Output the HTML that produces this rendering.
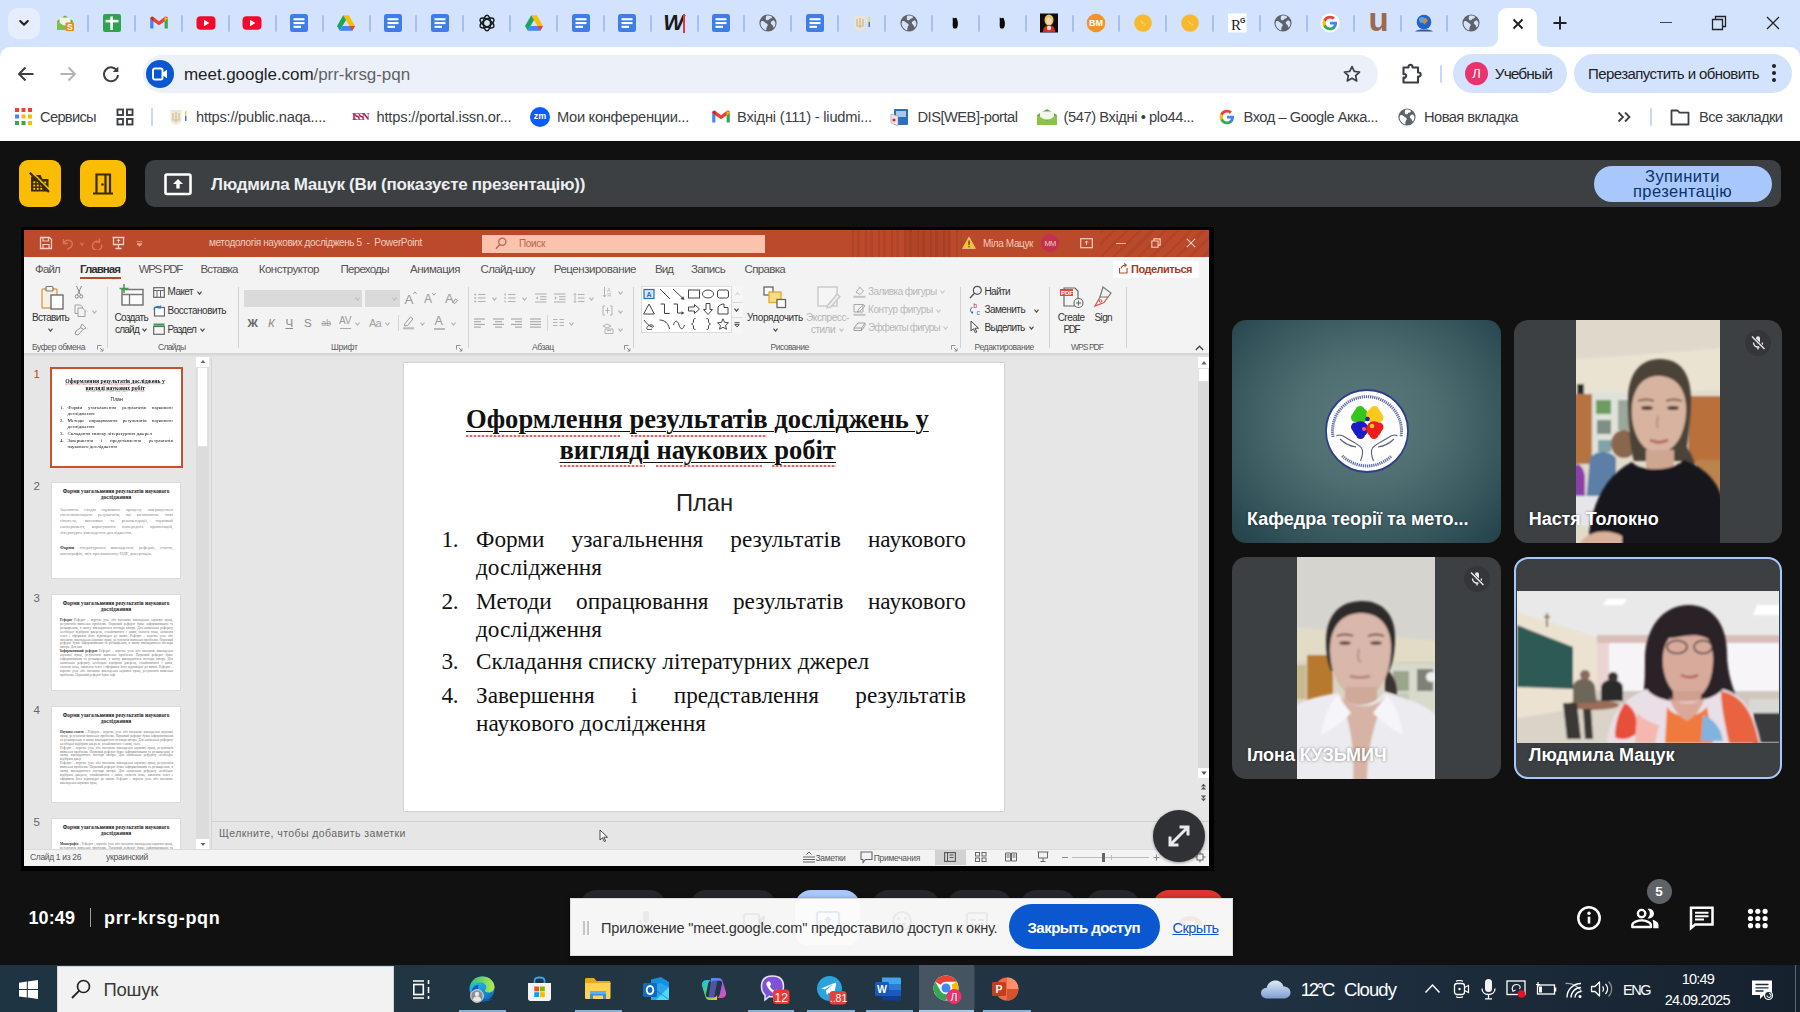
<!DOCTYPE html>
<html lang="uk">
<head>
<meta charset="utf-8">
<title>Meet</title>
<style>
*{box-sizing:border-box;margin:0;padding:0}
html,body{width:1800px;height:1012px;overflow:hidden;background:#111;font-family:"Liberation Sans","DejaVu Sans",sans-serif}
.a{position:absolute}
#root{position:relative;width:1800px;height:1012px;overflow:hidden}
/* ===== Chrome ===== */
#tabstrip{left:0;top:0;width:1800px;height:62px;background:#d3e3fd}
#toolbar{left:0;top:47px;width:1800px;height:94px;background:#fff;border-radius:10px 10px 0 0}
.tsep{width:2px;height:17px;top:15px;background:#a8c0ec;border-radius:1px}
.tico{width:20px;height:20px;top:13px}
#url{left:143px;top:55px;width:1235px;height:38px;border-radius:19px;background:#ecf0f9}
.bm{top:107px;font-size:15.5px;color:#3c4043;white-space:nowrap;letter-spacing:-0.1px}
/* ===== Meet ===== */
#meet{left:0;top:141px;width:1800px;height:824px;background:#111}
.ybtn{top:19px;height:47px;background:#fbbc04;border-radius:9px}
#mbar{left:145px;top:19px;width:1636px;height:47px;background:#3c4043;border-radius:10px}
.tile{background:#3c4043;border-radius:12px;overflow:hidden}
.tname{color:#fff;font-weight:bold;font-size:18px;white-space:nowrap;letter-spacing:-0.2px}
/* ===== PPT ===== */
#pptwrap{left:21px;top:86px;width:1192px;height:643px;background:#000}
#ppt{left:3px;top:3px;width:1185px;height:636px;background:#e6e6e6;overflow:hidden;font-family:"Liberation Sans",sans-serif}
#ptitle{left:0;top:0;width:1185px;height:27px;background:#b7472a}
#ptabs{left:0;top:27px;width:1185px;height:24px;background:#f3f3f3}
#ribbon{left:0;top:51px;width:1185px;height:73px;background:#f3f3f3;border-bottom:1px solid #d4d4d4}
.pt{top:5px;font-size:11.5px;color:#444;white-space:nowrap}
.rl{font-size:10.5px;color:#444;white-space:nowrap}
.rg{font-size:9px;color:#555;white-space:nowrap;top:61px}
.rsep{top:6px;width:1px;height:62px;background:#d0d0d0}
/* ===== Taskbar ===== */
#taskbar{left:0;top:965px;width:1800px;height:47px;background:linear-gradient(90deg,#1e3442 0%,#233643 45%,#1f3041 72%,#16212e 100%)}
</style>
</head>
<body>
<div id="root">

<!-- CHROME TABSTRIP -->
<div id="tabstrip" class="a"></div>
<svg class="a tico" style="left:55px" viewBox="0 0 20 20"><path d="M2 8l8-5.500L18 8v9H2z" fill="#6aa84f"/><path d="M4.500 4.500h11v8h-11z" fill="#eef3e6"/><path d="M2 8l8 5.500L18 8v9H2z" fill="#7fbf4d"/><rect x="10.500" y="9.500" width="8.500" height="8.500" rx="1" fill="#ef8a17"/><text x="14.750" y="16.600" font-size="8.500" font-weight="bold" fill="#fff" text-anchor="middle" font-family="Liberation Sans,sans-serif">S</text></svg>
<div class="a tsep" style="left:87.4px"></div>
<svg class="a tico" style="left:101.9px" viewBox="0 0 20 20"><rect x="1" y="1" width="18" height="18" rx="2" fill="#2ea44f"/><rect x="8.300" y="3.500" width="2.600" height="13.500" fill="#fff"/><rect x="3.500" y="6.800" width="13" height="2.600" fill="#fff"/></svg>
<div class="a tsep" style="left:134.3px"></div>
<svg class="a tico" style="left:148.7px" viewBox="0 0 20 20"><path d="M1.200 5.200v10.300h3.200V8.600z" fill="#4285f4"/><path d="M18.800 5.200v10.300h-3.200V8.600z" fill="#34a853"/><path d="M1.200 5.200c0-1.500 1.700-2.300 2.900-1.400L10 8.300l5.900-4.500c1.200-.9 2.900-.1 2.900 1.400l-3.200 3.400L10 12.200 4.400 8.600z" fill="#ea4335"/><path d="M15.600 4.100l3.200 1.100-3.200 3.400z" fill="#fbbc04"/><path d="M4.400 4.100L1.200 5.200l3.200 3.400z" fill="#c5221f"/></svg>
<div class="a tsep" style="left:181.1px"></div>
<svg class="a tico" style="left:195.6px" viewBox="0 0 20 20"><rect x="0.500" y="3.300" width="19" height="13.400" rx="4" fill="#f00b2c"/><path d="M8 6.800l5.300 3.200L8 13.200z" fill="#fff"/></svg>
<div class="a tsep" style="left:228.0px"></div>
<svg class="a tico" style="left:242.4px" viewBox="0 0 20 20"><rect x="0.500" y="3.300" width="19" height="13.400" rx="4" fill="#f00b2c"/><path d="M8 6.800l5.300 3.200L8 13.200z" fill="#fff"/></svg>
<div class="a tsep" style="left:274.8px"></div>
<svg class="a tico" style="left:289.3px" viewBox="0 0 20 20"><rect x="1" y="1" width="18" height="18" rx="2.5" fill="#3f7ee8"/><rect x="4.5" y="5.2" width="11" height="2.1" fill="#fff"/><rect x="4.5" y="9" width="11" height="2.1" fill="#fff"/><rect x="4.5" y="12.8" width="7.5" height="2.1" fill="#fff"/></svg>
<div class="a tsep" style="left:321.7px"></div>
<svg class="a tico" style="left:336.2px" viewBox="0 0 20 20"><path d="M7.200 2.200h5.600l6.200 10.700h-5.600z" fill="#fbbc04"/><path d="M7.200 2.200L1 12.900l2.800 4.800 6.200-10.700z" fill="#1ea362"/><path d="M3.800 17.700h12.400l2.800-4.800H6.600z" fill="#4285f4"/><path d="M13.400 12.900H19l-2.800 4.800-2.800-4.800z" fill="#ea4335"/></svg>
<div class="a tsep" style="left:368.6px"></div>
<svg class="a tico" style="left:383.0px" viewBox="0 0 20 20"><rect x="1" y="1" width="18" height="18" rx="2.5" fill="#3f7ee8"/><rect x="4.5" y="5.2" width="11" height="2.1" fill="#fff"/><rect x="4.5" y="9" width="11" height="2.1" fill="#fff"/><rect x="4.5" y="12.8" width="7.5" height="2.1" fill="#fff"/></svg>
<div class="a tsep" style="left:415.4px"></div>
<svg class="a tico" style="left:429.9px" viewBox="0 0 20 20"><rect x="1" y="1" width="18" height="18" rx="2.5" fill="#3f7ee8"/><rect x="4.5" y="5.2" width="11" height="2.1" fill="#fff"/><rect x="4.5" y="9" width="11" height="2.1" fill="#fff"/><rect x="4.5" y="12.8" width="7.5" height="2.1" fill="#fff"/></svg>
<div class="a tsep" style="left:462.3px"></div>
<svg class="a tico" style="left:476.7px" viewBox="0 0 20 20"><g fill="none" stroke="#1a1a1a" stroke-width="1.500"><ellipse cx="10" cy="10" rx="3.600" ry="7.800"/><ellipse cx="10" cy="10" rx="3.600" ry="7.800" transform="rotate(60 10 10)"/><ellipse cx="10" cy="10" rx="3.600" ry="7.800" transform="rotate(120 10 10)"/></g></svg>
<div class="a tsep" style="left:509.1px"></div>
<svg class="a tico" style="left:523.6px" viewBox="0 0 20 20"><path d="M7.200 2.200h5.600l6.200 10.700h-5.600z" fill="#fbbc04"/><path d="M7.200 2.200L1 12.900l2.800 4.800 6.200-10.700z" fill="#1ea362"/><path d="M3.800 17.700h12.400l2.800-4.800H6.600z" fill="#4285f4"/><path d="M13.400 12.900H19l-2.800 4.800-2.800-4.800z" fill="#ea4335"/></svg>
<div class="a tsep" style="left:556.0px"></div>
<svg class="a tico" style="left:570.5px" viewBox="0 0 20 20"><rect x="1" y="1" width="18" height="18" rx="2.5" fill="#3f7ee8"/><rect x="4.5" y="5.2" width="11" height="2.1" fill="#fff"/><rect x="4.5" y="9" width="11" height="2.1" fill="#fff"/><rect x="4.5" y="12.8" width="7.5" height="2.1" fill="#fff"/></svg>
<div class="a tsep" style="left:602.9px"></div>
<svg class="a tico" style="left:617.3px" viewBox="0 0 20 20"><rect x="1" y="1" width="18" height="18" rx="2.5" fill="#3f7ee8"/><rect x="4.5" y="5.2" width="11" height="2.1" fill="#fff"/><rect x="4.5" y="9" width="11" height="2.1" fill="#fff"/><rect x="4.5" y="12.8" width="7.5" height="2.1" fill="#fff"/></svg>
<div class="a tsep" style="left:649.7px"></div>
<div class="a" style="left:663.2px;top:10px;width:24px;height:26px;font:italic bold 22px 'Liberation Sans',sans-serif;color:#1a1a1a;letter-spacing:-1px">W</div><div class="a" style="left:683.1800000000001px;top:14px;width:1.500px;height:19px;background:#e53935"></div>
<div class="a tsep" style="left:696.6px"></div>
<svg class="a tico" style="left:711.0px" viewBox="0 0 20 20"><rect x="1" y="1" width="18" height="18" rx="2.5" fill="#3f7ee8"/><rect x="4.5" y="5.2" width="11" height="2.1" fill="#fff"/><rect x="4.5" y="9" width="11" height="2.1" fill="#fff"/><rect x="4.5" y="12.8" width="7.5" height="2.1" fill="#fff"/></svg>
<div class="a tsep" style="left:743.4px"></div>
<svg class="a tico" style="left:757.9px" viewBox="0 0 20 20"><circle cx="10" cy="10" r="8.6" fill="#5f6368"/><path d="M3.2 8.2c1.6-.4 3 .2 3.9 1.4.8 1 2.3.9 2.6 2.2.3 1.300-1.200 1.800-1.300 3.100-.1.900.2 1.800-.4 2.500C5.300 16.600 3 14.200 2.600 11.300c-.1-1.100.1-2.200.6-3.100zM8.300 2.700c1.800-.5 3.900-.3 5.600.7.300 1.300-.6 2-1.700 2.200-1.200.3-1.300 1.500-2.400 1.700-1.200.2-2.100-.7-2.100-1.800 0-1.100.200-2.100.600-2.800zM15.600 7.300c.9.600 1.600 1.600 1.800 2.800.100 1.600-.5 3.300-1.600 4.400-.8-.5-.7-1.600-1.300-2.300-.6-.8-1.700-1-1.700-2.100 0-1.300 1.400-2.500 2.800-2.800z" fill="#d3e3fd"/></svg>
<div class="a tsep" style="left:790.3px"></div>
<svg class="a tico" style="left:804.8px" viewBox="0 0 20 20"><rect x="1" y="1" width="18" height="18" rx="2.5" fill="#3f7ee8"/><rect x="4.5" y="5.2" width="11" height="2.1" fill="#fff"/><rect x="4.5" y="9" width="11" height="2.1" fill="#fff"/><rect x="4.5" y="12.8" width="7.5" height="2.1" fill="#fff"/></svg>
<div class="a tsep" style="left:837.2px"></div>
<svg class="a tico" style="left:851.6px" viewBox="0 0 20 20"><path d="M2.500 3h11v9.500c0 3-3 4.500-5.500 5.500-2.500-1-5.500-2.500-5.500-5.500z" fill="#ece4d4"/><path d="M5 6v7h6V6M8 5v10" stroke="#c9b98f" stroke-width="1.200" fill="none"/><rect x="16.500" y="4" width="1.500" height="5" fill="#e6d74a"/><rect x="16.500" y="9" width="1.500" height="5" fill="#4a74d9"/></svg>
<div class="a tsep" style="left:884.0px"></div>
<svg class="a tico" style="left:898.5px" viewBox="0 0 20 20"><circle cx="10" cy="10" r="8.6" fill="#5f6368"/><path d="M3.2 8.2c1.6-.4 3 .2 3.9 1.4.8 1 2.3.9 2.6 2.2.3 1.300-1.200 1.800-1.300 3.100-.1.900.2 1.800-.4 2.500C5.300 16.600 3 14.200 2.600 11.300c-.1-1.100.1-2.200.6-3.100zM8.300 2.700c1.800-.5 3.900-.3 5.600.7.300 1.300-.6 2-1.700 2.200-1.200.3-1.300 1.500-2.400 1.700-1.200.2-2.100-.7-2.100-1.800 0-1.100.200-2.100.600-2.800zM15.600 7.300c.9.600 1.600 1.600 1.800 2.800.100 1.600-.5 3.300-1.600 4.400-.8-.5-.7-1.600-1.300-2.300-.6-.8-1.700-1-1.700-2.100 0-1.300 1.400-2.500 2.800-2.800z" fill="#d3e3fd"/></svg>
<div class="a tsep" style="left:930.9px"></div>
<svg class="a tico" style="left:945.3px" viewBox="0 0 20 20"><path d="M7.800 4.500c.8.200 1 .8 1.500.8.700 0 1.300-.6 2.300-.4.300 1.200.9 2.300 1.200 4 .3 2 .1 4.600-1 6.200-.5.800-1.400.4-2.100.4-.8 0-1.400.1-1.700-1-.5-1.600-.3-3.800-.2-5.400.1-1.700-.3-3.300 0-4.600z" fill="#0b0b0b"/></svg>
<div class="a tsep" style="left:977.7px"></div>
<svg class="a tico" style="left:992.2px" viewBox="0 0 20 20"><path d="M7.800 4.500c.8.200 1 .8 1.500.8.700 0 1.300-.6 2.300-.4.300 1.200.9 2.300 1.200 4 .3 2 .1 4.600-1 6.200-.5.800-1.400.4-2.100.4-.8 0-1.400.1-1.700-1-.5-1.600-.3-3.800-.2-5.400.1-1.700-.3-3.300 0-4.600z" fill="#0b0b0b"/></svg>
<div class="a tsep" style="left:1024.6px"></div>
<svg class="a tico" style="left:1039.1px" viewBox="0 0 20 20"><rect x="1" y="0.500" width="18" height="19" fill="#140a08"/><ellipse cx="10" cy="7" rx="4.500" ry="5.500" fill="#e8c36a"/><ellipse cx="10" cy="8" rx="2.600" ry="3.300" fill="#f3d8b8"/><path d="M4 19c0-5 3-7 6-7s6 2 6 7z" fill="#d62a1f"/><circle cx="10" cy="15" r="2.200" fill="#f2e6dc"/></svg>
<div class="a tsep" style="left:1071.5px"></div>
<svg class="a tico" style="left:1085.9px" viewBox="0 0 20 20"><circle cx="10" cy="10" r="9.300" fill="#f4932c"/><text x="10" y="13.300" font-size="9" font-weight="bold" fill="#fff" text-anchor="middle" font-family="Liberation Sans,sans-serif">BM</text></svg>
<div class="a tsep" style="left:1118.3px"></div>
<svg class="a tico" style="left:1132.8px" viewBox="0 0 20 20"><circle cx="10" cy="10" r="8.800" fill="#f9b92e"/><path d="M7.500 7.500c1.500.8 2 1.800 2.500 3.500m1.500-.5c.3.600.5 1 .8 1.700" stroke="#fbd67c" stroke-width="1.200" fill="none"/></svg>
<div class="a tsep" style="left:1165.2px"></div>
<svg class="a tico" style="left:1179.6px" viewBox="0 0 20 20"><circle cx="10" cy="10" r="8.800" fill="#f9b92e"/><path d="M7.500 7.500c1.500.8 2 1.800 2.500 3.500m1.500-.5c.3.600.5 1 .8 1.700" stroke="#fbd67c" stroke-width="1.200" fill="none"/></svg>
<div class="a tsep" style="left:1212.0px"></div>
<svg class="a tico" style="left:1226.5px" viewBox="0 0 20 20"><rect x="1" y="0.500" width="18.500" height="19" fill="#fff"/><text x="4" y="16.500" font-size="15" fill="#222" font-family="Liberation Serif,serif">R</text><text x="13" y="9.500" font-size="7" font-weight="bold" fill="#222" font-family="Liberation Sans,sans-serif">G</text></svg>
<div class="a tsep" style="left:1258.9px"></div>
<svg class="a tico" style="left:1273.4px" viewBox="0 0 20 20"><circle cx="10" cy="10" r="8.6" fill="#5f6368"/><path d="M3.2 8.2c1.6-.4 3 .2 3.9 1.4.8 1 2.3.9 2.6 2.2.3 1.300-1.200 1.800-1.300 3.100-.1.900.2 1.800-.4 2.500C5.300 16.600 3 14.200 2.600 11.300c-.1-1.100.1-2.200.6-3.100zM8.300 2.700c1.800-.5 3.900-.3 5.600.7.300 1.300-.6 2-1.700 2.200-1.200.3-1.300 1.500-2.400 1.700-1.200.2-2.100-.7-2.100-1.800 0-1.100.200-2.100.600-2.800zM15.600 7.300c.9.600 1.600 1.600 1.800 2.800.100 1.600-.5 3.300-1.600 4.400-.8-.5-.7-1.600-1.300-2.300-.6-.8-1.700-1-1.700-2.100 0-1.300 1.400-2.500 2.800-2.800z" fill="#d3e3fd"/></svg>
<div class="a tsep" style="left:1305.8px"></div>
<svg class="a tico" style="left:1320.2px" viewBox="0 0 20 20"><circle cx="10" cy="10" r="9.600" fill="#fff"/><path d="M17 10.200c0-.5 0-.9-.1-1.400H10v2.700h3.900c-.2.900-.7 1.700-1.500 2.200v1.800h2.400c1.400-1.300 2.200-3.200 2.200-5.300z" fill="#4285f4"/><path d="M10 17.300c2 0 3.700-.7 4.900-1.800l-2.400-1.800c-.7.400-1.500.7-2.500.7-1.900 0-3.500-1.300-4.100-3H3.400v1.900c1.200 2.400 3.700 4 6.600 4z" fill="#34a853"/><path d="M5.900 11.400c-.3-.9-.3-1.900 0-2.800V6.700H3.400c-1 2.100-1 4.500 0 6.600z" fill="#fbbc05"/><path d="M10 5.600c1.100 0 2 .4 2.800 1.100l2.100-2.100C13.600 3.400 11.900 2.700 10 2.700c-2.900 0-5.400 1.600-6.600 4l2.500 1.900c.6-1.700 2.200-3 4.100-3z" fill="#ea4335"/></svg>
<div class="a tsep" style="left:1352.6px"></div>
<div class="a" style="left:1365.1px;top:3px;width:26px;height:34px;font:bold 33px/34px 'Liberation Sans',sans-serif;color:#9a6a4c;letter-spacing:-1px;text-align:center">u</div>
<div class="a tsep" style="left:1399.5px"></div>
<svg class="a tico" style="left:1413.9px" viewBox="0 0 20 20"><path d="M1 18.500c2-1.500 4-2 9-2s7 .5 9 2z" fill="#3a4fa0"/><circle cx="10" cy="9" r="7.300" fill="#1f63c9"/><circle cx="8" cy="7" r="3" fill="#5aa0ea"/><path d="M11 5c2 0 3 1.500 2.500 3s-2 1.500-2.500 3-2-1-2-2.500 0-3.500 2-3.500z" fill="#c98b3a"/></svg>
<div class="a tsep" style="left:1446.3px"></div>
<svg class="a tico" style="left:1460.8px" viewBox="0 0 20 20"><circle cx="10" cy="10" r="8.6" fill="#5f6368"/><path d="M3.2 8.2c1.6-.4 3 .2 3.9 1.4.8 1 2.3.9 2.6 2.2.3 1.300-1.200 1.800-1.300 3.100-.1.900.2 1.800-.4 2.500C5.300 16.600 3 14.200 2.600 11.300c-.1-1.100.1-2.200.6-3.100zM8.300 2.700c1.800-.5 3.900-.3 5.600.7.300 1.300-.6 2-1.700 2.200-1.200.3-1.300 1.500-2.400 1.700-1.200.2-2.100-.7-2.100-1.800 0-1.100.200-2.100.600-2.800zM15.600 7.300c.9.600 1.600 1.600 1.800 2.800.100 1.600-.5 3.300-1.600 4.400-.8-.5-.7-1.600-1.300-2.300-.6-.8-1.700-1-1.700-2.100 0-1.300 1.400-2.500 2.800-2.800z" fill="#d3e3fd"/></svg>
<!-- chevron button -->
<div class="a" style="left:8px;top:8px;width:32px;height:31px;border-radius:10px;background:#e6eefc"></div>
<svg class="a" style="left:16px;top:15px;width:16px;height:16px" viewBox="0 0 16 16"><path d="M4.200 6l3.800 3.800L11.800 6" fill="none" stroke="#1f1f1f" stroke-width="2" stroke-linecap="round" stroke-linejoin="round"/></svg>
<!-- active tab -->
<svg class="a" style="left:1486px;top:8px;width:64px;height:39px" viewBox="0 0 64 39"><path d="M0 39c8 0 12-3 12-10V9c0-5 4-9 9-9h21c5 0 9 4 9 9v20c0 7 4 10 13 10z" fill="#fff"/></svg>
<svg class="a" style="left:1510px;top:16px;width:16px;height:16px" viewBox="0 0 16 16"><path d="M3.500 3.500l9 9M12.500 3.500l-9 9" stroke="#1f1f1f" stroke-width="1.900" fill="none"/></svg>
<svg class="a" style="left:1551px;top:14px;width:18px;height:18px" viewBox="0 0 18 18"><path d="M9 2.500v13M2.500 9h13" stroke="#1f1f1f" stroke-width="1.900" fill="none"/></svg>
<!-- window controls -->
<div class="a" style="left:1660px;top:21.500px;width:12px;height:1.200px;background:#444"></div>
<svg class="a" style="left:1711px;top:15px;width:16px;height:16px" viewBox="0 0 16 16"><path d="M1.500 4.500h10v10h-10zM4.500 4.500v-3h10v10h-3" fill="none" stroke="#222" stroke-width="1.300"/></svg>
<svg class="a" style="left:1765px;top:15px;width:16px;height:16px" viewBox="0 0 16 16"><path d="M2 2l12 12M14 2L2 14" stroke="#222" stroke-width="1.300" fill="none"/></svg>

<!-- CHROME TOOLBAR -->
<div id="toolbar" class="a"></div>
<!-- nav buttons -->
<svg class="a" style="left:16px;top:64px;width:20px;height:20px" viewBox="0 0 20 20"><path d="M17.500 10H3.500M9.500 3.500L3 10l6.500 6.500" fill="none" stroke="#3c4043" stroke-width="2"/></svg>
<svg class="a" style="left:58px;top:64px;width:20px;height:20px" viewBox="0 0 20 20"><path d="M2.500 10h14M10.500 3.500L17 10l-6.500 6.500" fill="none" stroke="#b0b4b9" stroke-width="2"/></svg>
<svg class="a" style="left:100px;top:63px;width:22px;height:22px" viewBox="0 0 22 22"><path d="M17.300 8.200A7 7 0 1 0 18 12" fill="none" stroke="#3c4043" stroke-width="2"/><path d="M18.300 3.500v5.500h-5.500z" fill="#3c4043"/></svg>
<!-- url pill -->
<div id="url" class="a"></div>
<div class="a" style="left:146px;top:60px;width:28px;height:28px;border-radius:14px;background:#0b57d0"></div>
<svg class="a" style="left:152px;top:67px;width:16px;height:14px" viewBox="0 0 16 14"><rect x="1" y="1.500" width="9.500" height="11" rx="1.800" fill="none" stroke="#fff" stroke-width="1.900"/><path d="M11 5.500l4-2.700v8.400l-4-2.700z" fill="#fff"/></svg>
<svg class="a" style="left:1341.500px;top:63.500px;width:20px;height:20px" viewBox="0 0 22 22"><path d="M11 2.800l2.500 5.400 5.800.6-4.300 4 1.200 5.800L11 15.700l-5.200 2.900L7 12.800l-4.300-4 5.800-.6z" fill="none" stroke="#3f4349" stroke-width="1.900" stroke-linejoin="round"/></svg>
<!-- extension puzzle -->
<svg class="a" style="left:1399px;top:62px;width:24px;height:24px" viewBox="0 0 24 24"><path d="M4.500 5.500h5c-.3-1.700.5-2.700 2-2.700s2.300 1 2 2.700h5.500v5c1.700-.3 2.700.5 2.700 2s-1 2.300-2.700 2V20.500h-14.500v-5c1.800.4 2.700-.4 2.700-1.700s-.9-2.100-2.700-1.700z" fill="none" stroke="#3a3d42" stroke-width="2.100" stroke-linejoin="round"/></svg>
<div class="a" style="left:1440px;top:65px;width:2px;height:18px;background:#c7d9f7;border-radius:1px"></div>
<!-- profile pill -->
<div class="a" style="left:1453px;top:54px;width:114px;height:39px;border-radius:20px;background:#d3e3fd"></div>
<div class="a" style="left:1465px;top:62px;width:23px;height:23px;border-radius:12px;background:#e8336d;color:#fff;font-size:13px;text-align:center;line-height:23px">Л</div>
<!-- update pill -->
<div class="a" style="left:1574px;top:54px;width:218px;height:39px;border-radius:20px;background:#d3e3fd"></div>
<div class="a" style="left:1772px;top:64px;width:4px;height:4px;border-radius:2px;background:#1f1f1f;box-shadow:0 7px 0 #1f1f1f,0 14px 0 #1f1f1f"></div>
<!-- bookmarks bar -->
<svg class="a" style="left:15px;top:108px;width:17px;height:17px" viewBox="0 0 17 17"><g><rect x="0" y="0" width="4" height="4" fill="#ea4335"/><rect x="6.500" y="0" width="4" height="4" fill="#ea4335"/><rect x="13" y="0" width="4" height="4" fill="#ea4335"/><rect x="0" y="6.500" width="4" height="4" fill="#4285f4"/><rect x="6.500" y="6.500" width="4" height="4" fill="#fbbc04"/><rect x="13" y="6.500" width="4" height="4" fill="#fbbc04"/><rect x="0" y="13" width="4" height="4" fill="#34a853"/><rect x="6.500" y="13" width="4" height="4" fill="#34a853"/><rect x="13" y="13" width="4" height="4" fill="#fbbc04"/></g></svg>
<svg class="a" style="left:116px;top:108px;width:18px;height:18px" viewBox="0 0 18 18"><g fill="none" stroke="#3c4043" stroke-width="1.900"><rect x="1.500" y="1.500" width="5.500" height="5.500"/><rect x="11" y="1.500" width="5.500" height="5.500"/><rect x="1.500" y="11" width="5.500" height="5.500"/><rect x="11" y="11" width="5.500" height="5.500"/></g></svg>
<div class="a" style="left:151px;top:108px;width:2px;height:18px;background:#c7d9f7;border-radius:1px"></div>
<svg class="a" style="left:168px;top:107px;width:20px;height:20px" viewBox="0 0 20 20"><path d="M2.500 3h11v9.500c0 3-3 4.500-5.500 5.500-2.500-1-5.500-2.500-5.500-5.500z" fill="#f0e9da"/><path d="M5 6v7h6V6M8 5v10" stroke="#cdbf98" stroke-width="1.200" fill="none"/><rect x="17" y="4" width="1.500" height="5" fill="#e6d74a"/><rect x="17" y="9" width="1.500" height="5" fill="#4a74d9"/></svg>
<div class="a" style="left:352px;top:111px;font:bold 10.500px 'Liberation Serif',serif;color:#b01f5c;letter-spacing:-1.900px;white-space:nowrap">ISSN</div>
<div class="a" style="left:530px;top:107px;width:20px;height:20px;border-radius:10px;background:#0b5cff;color:#fff;font-size:9px;font-weight:bold;text-align:center;line-height:19px">zm</div>
<svg class="a" style="left:711px;top:107px;width:20px;height:20px" viewBox="0 0 20 20"><path d="M1.200 5.200v10.300h3.200V8.600z" fill="#4285f4"/><path d="M18.800 5.200v10.300h-3.200V8.600z" fill="#34a853"/><path d="M1.200 5.200c0-1.500 1.700-2.300 2.900-1.400L10 8.300l5.900-4.500c1.200-.9 2.900-.1 2.900 1.400l-3.200 3.400L10 12.200 4.400 8.600z" fill="#ea4335"/><path d="M15.600 4.100l3.200 1.100-3.200 3.400z" fill="#fbbc04"/><path d="M4.400 4.100L1.200 5.200l3.200 3.400z" fill="#c5221f"/></svg>
<svg class="a" style="left:889px;top:106px;width:22px;height:22px" viewBox="0 0 22 22"><rect x="5" y="3" width="14" height="16" rx="1" fill="#2f6fb7"/><rect x="7" y="5" width="10" height="6" fill="#a7c9ee"/><path d="M2 8l7 2v10l-7-3z" fill="#e9e9e9" stroke="#999" stroke-width=".6"/><circle cx="5" cy="14" r="1.600" fill="#d23"/></svg>
<svg class="a" style="left:1036px;top:107px;width:22px;height:20px" viewBox="0 0 22 20"><path d="M1 8l10-6 10 6v10H1z" fill="#6aa84f"/><path d="M4 4.500h14v8H4z" fill="#f2f5ea"/><path d="M1 8l10 6 10-6v10H1z" fill="#8bc34a"/></svg>
<svg class="a" style="left:1218px;top:108px;width:18px;height:18px" viewBox="1 1 18 18"><path d="M17 10.200c0-.5 0-.9-.1-1.400H10v2.700h3.900c-.2.900-.7 1.700-1.500 2.200v1.800h2.400c1.400-1.300 2.200-3.200 2.200-5.300z" fill="#4285f4"/><path d="M10 17.300c2 0 3.700-.7 4.900-1.800l-2.400-1.800c-.7.400-1.500.7-2.500.7-1.900 0-3.500-1.300-4.100-3H3.400v1.900c1.200 2.400 3.700 4 6.600 4z" fill="#34a853"/><path d="M5.900 11.400c-.3-.9-.3-1.900 0-2.800V6.700H3.400c-1 2.100-1 4.500 0 6.600z" fill="#fbbc05"/><path d="M10 5.600c1.100 0 2 .4 2.800 1.100l2.100-2.100C13.600 3.400 11.900 2.700 10 2.700c-2.900 0-5.400 1.600-6.600 4l2.500 1.900c.6-1.700 2.200-3 4.100-3z" fill="#ea4335"/></svg>
<svg class="a" style="left:1397px;top:107px;width:20px;height:20px" viewBox="0 0 20 20"><circle cx="10" cy="10" r="8.600" fill="#5f6368"/><path d="M3.200 8.200c1.600-.4 3 .2 3.900 1.400.8 1 2.300.9 2.600 2.200.3 1.300-1.200 1.800-1.300 3.100-.1.900.2 1.800-.4 2.500C5.300 16.600 3 14.200 2.600 11.300c-.1-1.100.1-2.200.6-3.100zM8.300 2.700c1.800-.5 3.900-.3 5.600.7.300 1.300-.6 2-1.700 2.200-1.200.3-1.300 1.500-2.400 1.700-1.200.2-2.100-.7-2.100-1.800 0-1.100.2-2.100.6-2.800zM15.600 7.300c.9.600 1.600 1.600 1.800 2.800.1 1.600-.5 3.300-1.600 4.400-.8-.5-.7-1.600-1.300-2.300-.6-.8-1.700-1-1.700-2.100 0-1.300 1.400-2.500 2.800-2.800z" fill="#fff"/></svg>
<svg class="a" style="left:1616px;top:110px;width:16px;height:14px" viewBox="0 0 16 14"><path d="M2.500 2.500L7 7l-4.500 4.500M9 2.500L13.500 7 9 11.500" fill="none" stroke="#3c4043" stroke-width="1.800"/></svg>
<div class="a" style="left:1650px;top:108px;width:2px;height:18px;background:#c7d9f7;border-radius:1px"></div>
<svg class="a" style="left:1670px;top:108px;width:20px;height:18px" viewBox="0 0 20 18"><path d="M1.500 2.500h6l2 2.200h9v11.800h-17z" fill="none" stroke="#3c4043" stroke-width="1.800" stroke-linejoin="round"/></svg>
<div class="a" style="left:184px;top:63.500px;font-size:17px;line-height:21px;color:#1f1f1f;white-space:pre;letter-spacing:-0.06px">meet.google.com<span style="color:#5f6368">/prr-krsg-pqn</span></div>
<div class="a" style="left:40.0px;top:108.1px;font-size:14.7px;line-height:18px;color:#3c4043;letter-spacing:-0.70px;white-space:pre;">Сервисы</div>
<div class="a" style="left:196.0px;top:108.1px;font-size:14.7px;line-height:18px;color:#3c4043;letter-spacing:-0.25px;white-space:pre;">https://public.naqa....</div>
<div class="a" style="left:376.5px;top:108.1px;font-size:14.7px;line-height:18px;color:#3c4043;letter-spacing:-0.19px;white-space:pre;">https://portal.issn.or...</div>
<div class="a" style="left:557.0px;top:108.1px;font-size:14.7px;line-height:18px;color:#3c4043;letter-spacing:-0.31px;white-space:pre;">Мои конференции...</div>
<div class="a" style="left:737.0px;top:108.1px;font-size:14.7px;line-height:18px;color:#3c4043;letter-spacing:-0.21px;white-space:pre;">Вхідні (111) - liudmi...</div>
<div class="a" style="left:917.5px;top:108.1px;font-size:14.7px;line-height:18px;color:#3c4043;letter-spacing:-0.52px;white-space:pre;">DIS[WEB]-portal</div>
<div class="a" style="left:1063.5px;top:108.1px;font-size:14.7px;line-height:18px;color:#3c4043;letter-spacing:-0.42px;white-space:pre;">(547) Вхідні • plo44...</div>
<div class="a" style="left:1243.5px;top:108.1px;font-size:14.7px;line-height:18px;color:#3c4043;letter-spacing:-0.48px;white-space:pre;">Вход – Google Акка...</div>
<div class="a" style="left:1424.0px;top:108.1px;font-size:14.7px;line-height:18px;color:#3c4043;letter-spacing:-0.56px;white-space:pre;">Новая вкладка</div>
<div class="a" style="left:1699.0px;top:108.1px;font-size:14.7px;line-height:18px;color:#3c4043;letter-spacing:-0.62px;white-space:pre;">Все закладки</div>
<div class="a" style="left:1494.7px;top:63.9px;font-size:15.5px;line-height:19px;color:#1f1f1f;letter-spacing:-0.90px;white-space:pre;">Учебный</div>
<div class="a" style="left:1588.0px;top:63.9px;font-size:15px;line-height:19px;color:#1f1f1f;letter-spacing:-0.58px;white-space:pre;">Перезапустить и обновить</div>

<!-- MEET -->
<div id="meet" class="a">
<div class="a" style="left:19.0px;top:19.0px;width:42.0px;height:47.0px;background:#fbbc04;border-radius:9px;"></div>
<svg class="a" style="left:29.0px;top:30.0px;width:22px;height:22px;" viewBox="0 0 22 22"><path d="M2 5.500V20.500H19.500V8H13.500L11.500 4H6.500V5.500z" fill="#3a2b00"/><g fill="#fbbc04"><rect x="4.3" y="10.3" width="1.900" height="1.900"/><rect x="4.3" y="13.6" width="1.900" height="1.900"/><rect x="4.3" y="16.9" width="1.900" height="1.900"/><rect x="7.8" y="10.3" width="1.900" height="1.900"/><rect x="7.8" y="13.6" width="1.900" height="1.900"/><rect x="7.8" y="16.9" width="1.900" height="1.900"/><rect x="11.3" y="10.3" width="1.900" height="1.900"/><rect x="11.3" y="13.6" width="1.900" height="1.900"/><rect x="11.3" y="16.9" width="1.900" height="1.900"/><rect x="15.300" y="10.500" width="1.900" height="1.900"/></g><path d="M2.600 0.700L21 19.100" stroke="#fbbc04" stroke-width="1.500" fill="none"/><path d="M.800 1.800L20 21" stroke="#3a2b00" stroke-width="2.200" fill="none"/></svg>
<div class="a" style="left:80.0px;top:19.0px;width:46.0px;height:47.0px;background:#fbbc04;border-radius:9px;"></div>
<svg class="a" style="left:92.0px;top:31.0px;width:22px;height:24px;" viewBox="0 0 22 24"><path d="M1 21.500h20M4.500 21V2.500h9v18.500M13.500 2.500H18V21" fill="none" stroke="#3a2b00" stroke-width="2.200"/><circle cx="10.500" cy="12.500" r="1.300" fill="#3a2b00"/></svg>
<div class="a" style="left:145.0px;top:19.0px;width:1636.0px;height:47.0px;background:#3c4043;border-radius:10px;"></div>
<svg class="a" style="left:164.0px;top:32.0px;width:28px;height:23px;" viewBox="0 0 28 23"><rect x="1.500" y="1.500" width="25" height="19.500" rx="1.500" fill="none" stroke="#fff" stroke-width="2.600"/><path d="M14 6l5 5h-3.300v4.500h-3.400V11H9z" fill="#fff"/></svg>
<div class="a" style="left:211.0px;top:32.7px;font-size:17px;line-height:21px;color:#eceef0;letter-spacing:-0.28px;white-space:pre;font-weight:bold;">Людмила Мацук (Ви (показуєте презентацію))</div>
<div class="a" style="left:1594.0px;top:25.0px;width:178.0px;height:36.0px;background:#a8c7fa;border-radius:18px;"></div>
<div class="a" style="left:1645.0px;top:25.2px;font-size:16.5px;line-height:21px;color:#0a336b;letter-spacing:0.44px;white-space:pre;">Зупинити</div>
<div class="a" style="left:1633.0px;top:39.5px;font-size:16.5px;line-height:21px;color:#0a336b;letter-spacing:0.40px;white-space:pre;">презентацію</div>
<div id="pptwrap" class="a" style="left:21px;top:86px;width:1193px;height:644px"><div id="ppt" class="a" style="left:3px;top:3px;width:1185px;height:636px">
<div class="a" style="left:0.0px;top:0.0px;width:1185.0px;height:27.0px;background:#bb4a2c;"></div>
<div class="a" style="left:828.0px;top:0.0px;width:110.0px;height:27.0px;background:repeating-linear-gradient(90deg,rgba(90,20,5,.13) 0 2px,rgba(0,0,0,0) 2px 5px,rgba(90,20,5,.1) 5px 8px,rgba(0,0,0,0) 8px 13px);"></div>
<div class="a" style="left:881.0px;top:0.0px;width:45.0px;height:27.0px;background:rgba(100,25,8,.10);"></div>
<div class="a" style="left:1076.0px;top:0.0px;width:109.0px;height:27.0px;background:repeating-linear-gradient(135deg,rgba(90,20,5,.10) 0 3px,rgba(0,0,0,0) 3px 9px);"></div>
<svg class="a" style="left:15.0px;top:6.0px;width:14px;height:14px;" viewBox="0 0 14 14"><path d="M1.500 1.500h9l2 2v9h-11z" fill="none" stroke="#f4cfc3" stroke-width="1.300"/><path d="M4 1.500v3.500h5.500V1.500M4 12.500V8.500h6v4" fill="none" stroke="#f4cfc3" stroke-width="1.200"/></svg>
<svg class="a" style="left:37.0px;top:6.0px;width:14px;height:14px;" viewBox="0 0 14 14"><path d="M2.500 3v4.500H7M2.800 7.300C4 4.500 7 3.300 9.500 4.800c2.300 1.400 2.400 4.600.3 6.300L6.500 13.500" fill="none" stroke="#d9765a" stroke-width="1.400"/></svg>
<svg class="a" style="left:56.0px;top:12.0px;width:4px;height:4px;" viewBox="0 0 4 4"><path d="M0.500 0.700L2.0 3.200L3.5 0.700" fill="none" stroke="#d9765a" stroke-width="1.100"/></svg>
<svg class="a" style="left:66.0px;top:6.0px;width:14px;height:14px;" viewBox="0 0 14 14"><path d="M9.500 2.500V6H6M9.300 5.800A4.600 4.600 0 1 0 11.500 8.500" fill="none" stroke="#d9765a" stroke-width="1.400"/></svg>
<svg class="a" style="left:88.0px;top:6.0px;width:13px;height:14px;" viewBox="0 0 13 14"><path d="M0.500 1.500h12M1.500 1.500v7h10v-7M6.500 8.500v3.500M3.500 12.500h6" fill="none" stroke="#f4cfc3" stroke-width="1.300"/><path d="M6.500 3.300v3.400M4.800 5l1.700-1.700L8.200 5" fill="none" stroke="#f4cfc3" stroke-width="1"/></svg>
<svg class="a" style="left:112.0px;top:11.0px;width:7px;height:6px;" viewBox="0 0 7 6"><path d="M0.500 0.700h6M1 2.800l2.500 2.400L6 2.800z" fill="#e9a892" stroke="#e9a892" stroke-width=".8"/></svg>
<div class="a" style="left:185.0px;top:7.4px;font-size:10px;line-height:12px;color:#f3cabc;letter-spacing:-0.37px;white-space:pre;">методологія наукових досліджень 5  -  PowerPoint</div>
<div class="a" style="left:458.0px;top:5.0px;width:282.5px;height:17.5px;background:#fbc3ad;"></div>
<svg class="a" style="left:471.0px;top:7.0px;width:12px;height:13px;" viewBox="0 0 12 13"><circle cx="7.300" cy="4.800" r="3.600" fill="none" stroke="#b5664f" stroke-width="1.300"/><path d="M4.800 7.500L1 11.800" stroke="#b5664f" stroke-width="1.400"/></svg>
<div class="a" style="left:495.0px;top:7.9px;font-size:10px;line-height:12px;color:#b5664f;letter-spacing:-0.34px;white-space:pre;">Поиск</div>
<svg class="a" style="left:938.0px;top:6.0px;width:14px;height:13px;" viewBox="0 0 14 13"><path d="M7 1L13.500 12.500H.500z" fill="#f7c325" stroke="#e9d9a0" stroke-width=".6"/><rect x="6.400" y="4.500" width="1.300" height="4.500" fill="#5a3a00"/><rect x="6.400" y="10" width="1.300" height="1.300" fill="#5a3a00"/></svg>
<div class="a" style="left:959.0px;top:7.9px;font-size:10px;line-height:12px;color:#f3cabc;letter-spacing:-0.38px;white-space:pre;">Міла Мацук</div>
<div class="a" style="left:1017.0px;top:4.0px;width:18.0px;height:18.0px;background:#c2314d;border-radius:9px;"></div>
<div class="a" style="left:1020.5px;top:9.3px;font-size:7.5px;line-height:9px;color:#f3cabc;letter-spacing:-0.75px;white-space:pre;">MM</div>
<svg class="a" style="left:1056.0px;top:8.0px;width:13px;height:11px;" viewBox="0 0 13 11"><rect x=".700" y=".700" width="11.600" height="9" fill="none" stroke="#f4cfc3" stroke-width="1.200"/><path d="M6.500 3v4M4.800 4.700L6.500 3l1.700 1.700" fill="none" stroke="#f4cfc3" stroke-width="1"/></svg>
<div class="a" style="left:1092.0px;top:12.5px;width:10.0px;height:1.3px;background:#e9b6a4;"></div>
<svg class="a" style="left:1127.0px;top:8.0px;width:10px;height:10px;" viewBox="0 0 12 12"><path d="M1 3.500h7.500v7.500H1zM3.500 3.500V1H11v7.500H8.500" fill="none" stroke="#f4cfc3" stroke-width="1.300"/></svg>
<svg class="a" style="left:1162.0px;top:8.0px;width:10px;height:10px;" viewBox="0 0 12 12"><path d="M1 1l10 10M11 1L1 11" stroke="#f4cfc3" stroke-width="1.300" fill="none"/></svg>
<div class="a" style="left:0.0px;top:27.0px;width:1185.0px;height:24.0px;background:#f3f3f3;"></div>
<div class="a" style="left:11.0px;top:32.0px;font-size:11.5px;line-height:14px;color:#555;letter-spacing:-0.82px;white-space:pre;">Файл</div>
<div class="a" style="left:56.0px;top:32.0px;font-size:11.5px;line-height:14px;color:#333;letter-spacing:-0.97px;white-space:pre;font-weight:bold;">Главная</div>
<div class="a" style="left:114.7px;top:32.0px;font-size:11.5px;line-height:14px;color:#555;letter-spacing:-1.30px;white-space:pre;">WPS PDF</div>
<div class="a" style="left:176.5px;top:32.0px;font-size:11.5px;line-height:14px;color:#555;letter-spacing:-0.82px;white-space:pre;">Вставка</div>
<div class="a" style="left:234.7px;top:32.0px;font-size:11.5px;line-height:14px;color:#555;letter-spacing:-0.48px;white-space:pre;">Конструктор</div>
<div class="a" style="left:316.5px;top:32.0px;font-size:11.5px;line-height:14px;color:#555;letter-spacing:-0.72px;white-space:pre;">Переходы</div>
<div class="a" style="left:386.0px;top:32.0px;font-size:11.5px;line-height:14px;color:#555;letter-spacing:-0.50px;white-space:pre;">Анимация</div>
<div class="a" style="left:456.5px;top:32.0px;font-size:11.5px;line-height:14px;color:#555;letter-spacing:-0.62px;white-space:pre;">Слайд-шоу</div>
<div class="a" style="left:529.7px;top:32.0px;font-size:11.5px;line-height:14px;color:#555;letter-spacing:-0.46px;white-space:pre;">Рецензирование</div>
<div class="a" style="left:631.0px;top:32.0px;font-size:11.5px;line-height:14px;color:#555;letter-spacing:-0.93px;white-space:pre;">Вид</div>
<div class="a" style="left:667.0px;top:32.0px;font-size:11.5px;line-height:14px;color:#555;letter-spacing:-0.62px;white-space:pre;">Запись</div>
<div class="a" style="left:720.5px;top:32.0px;font-size:11.5px;line-height:14px;color:#555;letter-spacing:-0.66px;white-space:pre;">Справка</div>
<div class="a" style="left:56.0px;top:47.0px;width:41.0px;height:2.0px;background:#b7472a;"></div>
<div class="a" style="left:1089.0px;top:30.5px;width:86.0px;height:17.0px;background:#fff;"></div>
<svg class="a" style="left:1094.0px;top:33.0px;width:11px;height:11px;" viewBox="0 0 11 11"><path d="M1.500 5v5h7.500V5M3 5.500C3.500 3 5.500 2 8 2M6.300 .500L8.300 2 6.500 3.800" fill="none" stroke="#b7472a" stroke-width="1.100"/></svg>
<div class="a" style="left:1107.0px;top:32.4px;font-size:11px;line-height:14px;color:#a33d26;letter-spacing:-0.50px;white-space:pre;font-weight:bold;">Поделиться</div>
<div class="a" style="left:0.0px;top:51.0px;width:1185.0px;height:72.5px;background:#f3f3f3;"></div>
<div class="a" style="left:0.0px;top:123.0px;width:1185.0px;height:1.5px;background:#d6d6d6;"></div>
<div class="a" style="left:0.0px;top:124.5px;width:1185.0px;height:3.0px;background:linear-gradient(180deg,#dedede,#e6e6e6);"></div>
<div class="a" style="left:83.0px;top:57.0px;width:1.0px;height:61.0px;background:#d2d2d2;"></div>
<div class="a" style="left:213.5px;top:57.0px;width:1.0px;height:61.0px;background:#d2d2d2;"></div>
<div class="a" style="left:443.5px;top:57.0px;width:1.0px;height:61.0px;background:#d2d2d2;"></div>
<div class="a" style="left:609.0px;top:57.0px;width:1.0px;height:61.0px;background:#d2d2d2;"></div>
<div class="a" style="left:936.0px;top:57.0px;width:1.0px;height:61.0px;background:#d2d2d2;"></div>
<div class="a" style="left:1025.0px;top:57.0px;width:1.0px;height:61.0px;background:#d2d2d2;"></div>
<div class="a" style="left:1101.5px;top:57.0px;width:1.0px;height:61.0px;background:#d2d2d2;"></div>
<svg class="a" style="left:16.0px;top:55.0px;width:26px;height:26px;" viewBox="0 0 26 26"><rect x="2" y="4" width="15" height="19" rx="1" fill="#f6f0e4" stroke="#d9a24f" stroke-width="1.400"/><rect x="6" y="1.500" width="7" height="4.500" rx="1" fill="#f3f3f3" stroke="#777" stroke-width="1.200"/><rect x="11" y="10" width="12" height="14" fill="#fff" stroke="#666" stroke-width="1.300"/></svg>
<div class="a" style="left:8.0px;top:81.9px;font-size:10px;line-height:12px;color:#333;letter-spacing:-0.67px;white-space:pre;">Вставить</div>
<svg class="a" style="left:23.5px;top:97.5px;width:5px;height:4px;" viewBox="0 0 5 4"><path d="M0.500 0.700L2.5 3.200L4.5 0.700" fill="none" stroke="#444" stroke-width="1.100"/></svg>
<svg class="a" style="left:50.0px;top:55.0px;width:10px;height:14px;" viewBox="0 0 10 14"><path d="M2.500 1l4 9M7.500 1l-4 9" stroke="#8a8a8a" stroke-width="1"/><circle cx="2.800" cy="11.500" r="1.600" fill="none" stroke="#8a8a8a" stroke-width="1"/><circle cx="7.200" cy="11.500" r="1.600" fill="none" stroke="#8a8a8a" stroke-width="1"/></svg>
<svg class="a" style="left:50.0px;top:74.0px;width:12px;height:13px;" viewBox="0 0 12 13"><path d="M1 1h5.500l2 2v6.500H1z" fill="#f3f3f3" stroke="#a0a0a0" stroke-width="1"/><path d="M4 4h4.500l2.500 2.500V12.500H4z" fill="#f3f3f3" stroke="#a0a0a0" stroke-width="1"/></svg>
<svg class="a" style="left:67.5px;top:79.5px;width:5px;height:4px;" viewBox="0 0 5 4"><path d="M0.500 0.700L2.5 3.200L4.5 0.700" fill="none" stroke="#b0b0b0" stroke-width="1.100"/></svg>
<svg class="a" style="left:50.0px;top:93.0px;width:13px;height:13px;" viewBox="0 0 13 13"><path d="M8 1l4 4-3 1.500-2.500-2.500zM7 4.500l2 2L4 12l-3-1 1-3z" fill="none" stroke="#9a9a9a" stroke-width="1"/></svg>
<div class="a" style="left:8.0px;top:112.3px;font-size:8.5px;line-height:11px;color:#5a5a5a;letter-spacing:-0.40px;white-space:pre;">Буфер обмена</div>
<svg class="a" style="left:73.0px;top:114.5px;width:7px;height:7px;" viewBox="0 0 7 7"><path d="M.500 .500h4M.500 .500v4M3 3l3 3M6 3.500V6H3.500" fill="none" stroke="#888" stroke-width=".9"/></svg>
<svg class="a" style="left:94.0px;top:53.0px;width:28px;height:25px;" viewBox="0 0 28 25"><rect x="4" y="6.500" width="21" height="15.500" fill="#fafafa" stroke="#777" stroke-width="1.500"/><path d="M4 11.500h21M11.500 11.500V22" stroke="#777" stroke-width="1.300"/><path d="M6 1v9M1.500 5.500h9" stroke="#3c9d4e" stroke-width="1.500"/></svg>
<div class="a" style="left:90.5px;top:81.9px;font-size:10px;line-height:12px;color:#333;letter-spacing:-0.64px;white-space:pre;">Создать</div>
<div class="a" style="left:91.0px;top:93.7px;font-size:10px;line-height:12px;color:#333;letter-spacing:-0.76px;white-space:pre;">слайд</div>
<svg class="a" style="left:117.5px;top:98.0px;width:5px;height:4px;" viewBox="0 0 5 4"><path d="M0.500 0.700L2.5 3.200L4.5 0.700" fill="none" stroke="#444" stroke-width="1.100"/></svg>
<svg class="a" style="left:129.0px;top:56.5px;width:12px;height:11px;" viewBox="0 0 12 11"><rect x=".700" y=".700" width="10.600" height="9.600" fill="#fafafa" stroke="#666" stroke-width="1.200"/><path d="M.700 3.500h10.600M4 3.500v6.800M7.500 3.500v6.800" stroke="#666" stroke-width="1"/></svg>
<div class="a" style="left:143.5px;top:56.4px;font-size:10px;line-height:12px;color:#333;letter-spacing:-0.56px;white-space:pre;">Макет</div>
<svg class="a" style="left:172.5px;top:60.5px;width:5px;height:4px;" viewBox="0 0 5 4"><path d="M0.500 0.700L2.5 3.200L4.5 0.700" fill="none" stroke="#444" stroke-width="1.100"/></svg>
<svg class="a" style="left:129.0px;top:75.0px;width:12px;height:12px;" viewBox="0 0 12 12"><rect x="1.500" y="2.500" width="10" height="8.500" fill="#fafafa" stroke="#666" stroke-width="1.200"/><path d="M1 5a3.500 3.500 0 0 1 6-2.500M7.500 .500v2.500H5" fill="none" stroke="#2b7bd3" stroke-width="1.200"/></svg>
<div class="a" style="left:143.5px;top:75.4px;font-size:10px;line-height:12px;color:#333;letter-spacing:-0.46px;white-space:pre;">Восстановить</div>
<svg class="a" style="left:129.0px;top:93.0px;width:12px;height:12px;" viewBox="0 0 12 12"><rect x=".700" y="3.500" width="10.600" height="7.800" fill="#fafafa" stroke="#666" stroke-width="1.200"/><rect x=".500" y=".500" width="11" height="2.200" fill="#3c9d4e"/></svg>
<div class="a" style="left:143.5px;top:93.9px;font-size:10px;line-height:12px;color:#333;letter-spacing:-0.76px;white-space:pre;">Раздел</div>
<svg class="a" style="left:175.5px;top:98.0px;width:5px;height:4px;" viewBox="0 0 5 4"><path d="M0.500 0.700L2.5 3.200L4.5 0.700" fill="none" stroke="#444" stroke-width="1.100"/></svg>
<div class="a" style="left:134.0px;top:112.3px;font-size:8.5px;line-height:11px;color:#5a5a5a;letter-spacing:-0.69px;white-space:pre;">Слайды</div>
<div class="a" style="left:219.7px;top:59.5px;width:118.5px;height:17.5px;background:#dadada;"></div>
<svg class="a" style="left:330.5px;top:67.0px;width:5px;height:4px;" viewBox="0 0 5 4"><path d="M0.500 0.700L2.5 3.200L4.5 0.700" fill="none" stroke="#bdbdbd" stroke-width="1.100"/></svg>
<div class="a" style="left:341.0px;top:59.5px;width:34.5px;height:17.5px;background:#dadada;"></div>
<svg class="a" style="left:368.0px;top:67.0px;width:5px;height:4px;" viewBox="0 0 5 4"><path d="M0.500 0.700L2.5 3.200L4.5 0.700" fill="none" stroke="#bdbdbd" stroke-width="1.100"/></svg>
<div class="a" style="left:380.5px;top:60.5px;font-size:13.5px;line-height:17px;color:#9a9a9a;letter-spacing:-0.50px;white-space:pre;">A</div>
<svg class="a" style="left:389.0px;top:61.0px;width:4px;height:4px;" viewBox="0 0 4 4"><path d="M.300 3L2 .800 3.700 3" fill="none" stroke="#9a9a9a" stroke-width=".9"/></svg>
<div class="a" style="left:400.0px;top:62.0px;font-size:12px;line-height:15px;color:#9a9a9a;letter-spacing:-0.50px;white-space:pre;">A</div>
<svg class="a" style="left:407.5px;top:61.5px;width:4px;height:4px;" viewBox="0 0 4 4"><path d="M.300 1L2 3.200 3.700 1" fill="none" stroke="#9a9a9a" stroke-width=".9"/></svg>
<div class="a" style="left:421.0px;top:61.0px;font-size:13px;line-height:16px;color:#9a9a9a;letter-spacing:-0.67px;white-space:pre;">A</div>
<svg class="a" style="left:428.0px;top:68.0px;width:6px;height:6px;" viewBox="0 0 6 6"><path d="M1 4.500L3.500 1l2 1.500L3 5.500z" fill="none" stroke="#9a9a9a" stroke-width=".9"/></svg>
<div class="a" style="left:223.5px;top:86.0px;font-size:11.5px;line-height:14px;color:#666;letter-spacing:0.11px;white-space:pre;font-weight:bold;">Ж</div>
<div class="a" style="left:244.0px;top:86.0px;font-size:11.5px;line-height:14px;color:#8a8a8a;letter-spacing:0.22px;white-space:pre;font-style:italic;">К</div>
<div class="a" style="left:261.5px;top:85.5px;font-size:11.5px;line-height:14px;color:#8a8a8a;letter-spacing:-0.16px;white-space:pre;text-decoration:underline;">Ч</div>
<div class="a" style="left:280.0px;top:86.0px;font-size:11.5px;line-height:14px;color:#8a8a8a;letter-spacing:-1.17px;white-space:pre;">S</div>
<div class="a" style="left:297.5px;top:87.8px;font-size:8.5px;line-height:11px;color:#a0a0a0;letter-spacing:0.02px;white-space:pre;text-decoration:line-through;">ab</div>
<div class="a" style="left:315.0px;top:85.4px;font-size:10px;line-height:12px;color:#9a9a9a;letter-spacing:-0.30px;white-space:pre;">AV</div>
<div class="a" style="left:315.5px;top:98.0px;width:11.0px;height:1.0px;background:#aaa;"></div>
<svg class="a" style="left:331.0px;top:91.5px;width:5px;height:4px;" viewBox="0 0 5 4"><path d="M0.500 0.700L2.5 3.200L4.5 0.700" fill="none" stroke="#b5b5b5" stroke-width="1.100"/></svg>
<div class="a" style="left:345.0px;top:86.4px;font-size:11px;line-height:14px;color:#a0a0a0;letter-spacing:-0.73px;white-space:pre;">Aa</div>
<svg class="a" style="left:361.0px;top:91.5px;width:5px;height:4px;" viewBox="0 0 5 4"><path d="M0.500 0.700L2.5 3.200L4.5 0.700" fill="none" stroke="#b5b5b5" stroke-width="1.100"/></svg>
<div class="a" style="left:374.0px;top:85.0px;width:1.0px;height:16.0px;background:#d6d6d6;"></div>
<svg class="a" style="left:378.0px;top:85.0px;width:13px;height:15px;" viewBox="0 0 13 15"><path d="M3 8.500L8.500 2l2.500 2L5.500 10.500l-3 .500z" fill="none" stroke="#9a9a9a" stroke-width="1"/><rect x="1" y="12.300" width="11" height="2" fill="#b9b9b9"/></svg>
<svg class="a" style="left:395.5px;top:91.5px;width:5px;height:4px;" viewBox="0 0 5 4"><path d="M0.500 0.700L2.5 3.200L4.5 0.700" fill="none" stroke="#b5b5b5" stroke-width="1.100"/></svg>
<div class="a" style="left:410.5px;top:83.0px;font-size:12.5px;line-height:16px;color:#9a9a9a;letter-spacing:0.66px;white-space:pre;">A</div>
<div class="a" style="left:409.5px;top:97.5px;width:11.0px;height:2.0px;background:#b9b9b9;"></div>
<svg class="a" style="left:427.0px;top:91.5px;width:5px;height:4px;" viewBox="0 0 5 4"><path d="M0.500 0.700L2.5 3.200L4.5 0.700" fill="none" stroke="#b5b5b5" stroke-width="1.100"/></svg>
<div class="a" style="left:307.0px;top:112.3px;font-size:8.5px;line-height:11px;color:#5a5a5a;letter-spacing:-0.29px;white-space:pre;">Шрифт</div>
<svg class="a" style="left:432.0px;top:114.5px;width:7px;height:7px;" viewBox="0 0 7 7"><path d="M.500 .500h4M.500 .500v4M3 3l3 3M6 3.500V6H3.500" fill="none" stroke="#888" stroke-width=".9"/></svg>
<svg class="a" style="left:450.0px;top:62.5px;width:12px;height:10px;" viewBox="0 0 12 10"><circle cx="1.200" cy="1.5" r="1" fill="#b3b3b3"/><path d="M4 1.5h7.500" stroke="#b3b3b3" stroke-width="1.100"/><circle cx="1.200" cy="5" r="1" fill="#b3b3b3"/><path d="M4 5h7.500" stroke="#b3b3b3" stroke-width="1.100"/><circle cx="1.200" cy="8.5" r="1" fill="#b3b3b3"/><path d="M4 8.5h7.500" stroke="#b3b3b3" stroke-width="1.100"/></svg>
<svg class="a" style="left:467.5px;top:66.5px;width:5px;height:4px;" viewBox="0 0 5 4"><path d="M0.500 0.700L2.5 3.200L4.5 0.700" fill="none" stroke="#b3b3b3" stroke-width="1.100"/></svg>
<svg class="a" style="left:480.0px;top:62.5px;width:12px;height:10px;" viewBox="0 0 12 10"><rect x=".500" y="0.5" width="1.200" height="2" fill="#b3b3b3"/><path d="M4 1.5h7.500" stroke="#b3b3b3" stroke-width="1.100"/><rect x=".500" y="4" width="1.200" height="2" fill="#b3b3b3"/><path d="M4 5h7.500" stroke="#b3b3b3" stroke-width="1.100"/><rect x=".500" y="7.5" width="1.200" height="2" fill="#b3b3b3"/><path d="M4 8.5h7.500" stroke="#b3b3b3" stroke-width="1.100"/></svg>
<svg class="a" style="left:497.5px;top:66.5px;width:5px;height:4px;" viewBox="0 0 5 4"><path d="M0.500 0.700L2.5 3.200L4.5 0.700" fill="none" stroke="#b3b3b3" stroke-width="1.100"/></svg>
<svg class="a" style="left:511.0px;top:62.5px;width:12px;height:10px;" viewBox="0 0 12 10"><path d="M0 1h11.5" stroke="#b3b3b3" stroke-width="1.100"/><path d="M5 3.7h6.5" stroke="#b3b3b3" stroke-width="1.100"/><path d="M5 6.3h6.5" stroke="#b3b3b3" stroke-width="1.100"/><path d="M0 9h11.5" stroke="#b3b3b3" stroke-width="1.100"/><path d="M3 3.200L.800 5l2.200 1.800z" fill="#b3b3b3"/></svg>
<svg class="a" style="left:530.0px;top:62.5px;width:12px;height:10px;" viewBox="0 0 12 10"><path d="M0 1h11.5" stroke="#b3b3b3" stroke-width="1.100"/><path d="M5 3.7h6.5" stroke="#b3b3b3" stroke-width="1.100"/><path d="M5 6.3h6.5" stroke="#b3b3b3" stroke-width="1.100"/><path d="M0 9h11.5" stroke="#b3b3b3" stroke-width="1.100"/><path d="M.800 3.200L3 5 .800 6.800z" fill="#b3b3b3"/></svg>
<svg class="a" style="left:549.0px;top:62.5px;width:12px;height:10px;" viewBox="0 0 12 10"><path d="M5 1.5h6.500" stroke="#b3b3b3" stroke-width="1.100"/><path d="M5 5h6.500" stroke="#b3b3b3" stroke-width="1.100"/><path d="M5 8.5h6.500" stroke="#b3b3b3" stroke-width="1.100"/><path d="M2 .500v9M.500 2L2 .500 3.500 2M.500 8L2 9.500 3.500 8" fill="none" stroke="#b3b3b3" stroke-width=".9"/></svg>
<svg class="a" style="left:565.0px;top:66.5px;width:5px;height:4px;" viewBox="0 0 5 4"><path d="M0.500 0.700L2.5 3.200L4.5 0.700" fill="none" stroke="#b3b3b3" stroke-width="1.100"/></svg>
<svg class="a" style="left:578.0px;top:56.0px;width:10px;height:12px;" viewBox="0 0 10 12"><path d="M2.500 1v10M.800 9L2.500 11 4.200 9" fill="none" stroke="#b3b3b3" stroke-width="1"/><text x="5" y="5.500" font-size="5.500" fill="#b3b3b3" font-family="Liberation Sans,sans-serif">A</text><text x="5" y="11" font-size="5.500" fill="#b3b3b3" font-family="Liberation Sans,sans-serif">Я</text></svg>
<svg class="a" style="left:593.5px;top:60.5px;width:5px;height:4px;" viewBox="0 0 5 4"><path d="M0.500 0.700L2.5 3.200L4.5 0.700" fill="none" stroke="#b3b3b3" stroke-width="1.100"/></svg>
<svg class="a" style="left:577.5px;top:75.0px;width:11px;height:11px;" viewBox="0 0 11 11"><path d="M3 1H1v9h2M8 1h2v9H8M5.500 2.500v6M3.500 5.500h4" fill="none" stroke="#b3b3b3" stroke-width="1"/></svg>
<svg class="a" style="left:593.5px;top:79.5px;width:5px;height:4px;" viewBox="0 0 5 4"><path d="M0.500 0.700L2.5 3.200L4.5 0.700" fill="none" stroke="#b3b3b3" stroke-width="1.100"/></svg>
<svg class="a" style="left:577.5px;top:93.0px;width:12px;height:11px;" viewBox="0 0 12 11"><path d="M1 3l4-2 4 2-4 2zM3 6h8v4.500H3zM5 7.500h4" fill="none" stroke="#b3b3b3" stroke-width="1"/></svg>
<svg class="a" style="left:593.5px;top:97.5px;width:5px;height:4px;" viewBox="0 0 5 4"><path d="M0.500 0.700L2.5 3.200L4.5 0.700" fill="none" stroke="#b3b3b3" stroke-width="1.100"/></svg>
<svg class="a" style="left:450.0px;top:87.5px;width:12px;height:10px;" viewBox="0 0 12 10"><path d="M0 1.0h11" stroke="#a5a5a5" stroke-width="1.100"/><path d="M0 3.7h7" stroke="#a5a5a5" stroke-width="1.100"/><path d="M0 6.4h11" stroke="#a5a5a5" stroke-width="1.100"/><path d="M0 9.100000000000001h7" stroke="#a5a5a5" stroke-width="1.100"/></svg>
<svg class="a" style="left:468.5px;top:87.5px;width:12px;height:10px;" viewBox="0 0 12 10"><path d="M0.0 1.0h11" stroke="#a5a5a5" stroke-width="1.100"/><path d="M2.0 3.7h7" stroke="#a5a5a5" stroke-width="1.100"/><path d="M0.0 6.4h11" stroke="#a5a5a5" stroke-width="1.100"/><path d="M2.0 9.100000000000001h7" stroke="#a5a5a5" stroke-width="1.100"/></svg>
<svg class="a" style="left:487.0px;top:87.5px;width:12px;height:10px;" viewBox="0 0 12 10"><path d="M0 1.0h11" stroke="#a5a5a5" stroke-width="1.100"/><path d="M4 3.7h7" stroke="#a5a5a5" stroke-width="1.100"/><path d="M0 6.4h11" stroke="#a5a5a5" stroke-width="1.100"/><path d="M4 9.100000000000001h7" stroke="#a5a5a5" stroke-width="1.100"/></svg>
<svg class="a" style="left:506.0px;top:87.5px;width:12px;height:10px;" viewBox="0 0 12 10"><path d="M0 1.0h11" stroke="#a5a5a5" stroke-width="1.100"/><path d="M0 3.7h11" stroke="#a5a5a5" stroke-width="1.100"/><path d="M0 6.4h11" stroke="#a5a5a5" stroke-width="1.100"/><path d="M0 9.100000000000001h11" stroke="#a5a5a5" stroke-width="1.100"/></svg>
<div class="a" style="left:523.0px;top:85.0px;width:1.0px;height:16.0px;background:#d6d6d6;"></div>
<svg class="a" style="left:529.0px;top:87.5px;width:12px;height:10px;" viewBox="0 0 12 10"><path d="M0 1.5h4.500M6.500 1.5h4.500" stroke="#b3b3b3" stroke-width="1.100"/><path d="M0 4.5h4.500M6.500 4.5h4.500" stroke="#b3b3b3" stroke-width="1.100"/><path d="M0 7.5h4.500M6.500 7.5h4.500" stroke="#b3b3b3" stroke-width="1.100"/></svg>
<svg class="a" style="left:545.0px;top:91.5px;width:5px;height:4px;" viewBox="0 0 5 4"><path d="M0.500 0.700L2.5 3.200L4.5 0.700" fill="none" stroke="#b3b3b3" stroke-width="1.100"/></svg>
<div class="a" style="left:508.0px;top:112.3px;font-size:8.5px;line-height:11px;color:#5a5a5a;letter-spacing:-0.43px;white-space:pre;">Абзац</div>
<svg class="a" style="left:600.0px;top:114.5px;width:7px;height:7px;" viewBox="0 0 7 7"><path d="M.500 .500h4M.500 .500v4M3 3l3 3M6 3.500V6H3.500" fill="none" stroke="#888" stroke-width=".9"/></svg>
<div class="a" style="left:617.0px;top:56.0px;width:101.5px;height:46.5px;background:#fff;border:1px solid #dcdcdc;"></div>
<div class="a" style="left:707.0px;top:56.0px;width:11.5px;height:46.5px;background:#f6f6f6;border-left:1px solid #dcdcdc;"></div>
<div class="a" style="left:707.0px;top:71.5px;width:11.5px;height:1.0px;background:#dcdcdc;"></div>
<div class="a" style="left:707.0px;top:87.0px;width:11.5px;height:1.0px;background:#dcdcdc;"></div>
<svg class="a" style="left:710.2px;top:77.5px;width:5px;height:4px;" viewBox="0 0 5 4"><path d="M0.500 0.700L2.5 3.200L4.5 0.700" fill="none" stroke="#444" stroke-width="1.100"/></svg>
<svg class="a" style="left:710.5px;top:61.5px;width:5px;height:4px;" viewBox="0 0 5 4"><path d="M.500 3.200L2.500 .700 4.500 3.200" fill="none" stroke="#c8c8c8" stroke-width="1"/></svg>
<svg class="a" style="left:710.0px;top:91.5px;width:6px;height:6px;" viewBox="0 0 6 6"><path d="M.500 .700h5" stroke="#444" stroke-width="1"/><path d="M.800 2.500L3 5l2.200-2.500z" fill="none" stroke="#444" stroke-width=".9"/></svg>
<svg class="a" style="left:618.7px;top:57.7px;width:12px;height:12px;" viewBox="0 0 12 12"><rect x="1" y="1.500" width="10" height="9" fill="#d6e8fb" stroke="#2b6cb8" stroke-width="1.200"/><text x="3.600" y="8.800" font-size="7" font-weight="bold" fill="#2b6cb8" font-family="Liberation Sans,sans-serif">A</text></svg>
<svg class="a" style="left:634.5px;top:57.7px;width:12px;height:12px;" viewBox="0 0 12 12"><path d="M1 1l10 10" stroke="#444" stroke-width="1"/></svg>
<svg class="a" style="left:648.7px;top:57.7px;width:12px;height:12px;" viewBox="0 0 12 12"><path d="M0 1l10 9.500" stroke="#444" stroke-width="1"/><path d="M11.500 12l-4-1 2.800-2.800z" fill="#444"/></svg>
<svg class="a" style="left:663.7px;top:57.7px;width:12px;height:12px;" viewBox="0 0 12 12"><rect x=".500" y="2" width="11" height="8" fill="none" stroke="#444" stroke-width="1"/></svg>
<svg class="a" style="left:677.5px;top:57.7px;width:12px;height:12px;" viewBox="0 0 12 12"><ellipse cx="6" cy="6" rx="5.500" ry="4" fill="none" stroke="#444" stroke-width="1"/></svg>
<svg class="a" style="left:692.5px;top:57.7px;width:12px;height:12px;" viewBox="0 0 12 12"><rect x=".500" y="2" width="11" height="8" rx="2" fill="none" stroke="#444" stroke-width="1"/></svg>
<svg class="a" style="left:618.7px;top:72.7px;width:12px;height:12px;" viewBox="0 0 12 12"><path d="M6 1l5.300 10H.700z" fill="none" stroke="#444" stroke-width="1"/></svg>
<svg class="a" style="left:634.5px;top:72.7px;width:12px;height:12px;" viewBox="0 0 12 12"><path d="M1.500 1h4v9.500h5" fill="none" stroke="#444" stroke-width="1"/></svg>
<svg class="a" style="left:648.7px;top:72.7px;width:12px;height:12px;" viewBox="0 0 12 12"><path d="M.500 1h4v9h4" fill="none" stroke="#444" stroke-width="1"/><path d="M11.500 10l-3.200 1.800V8.200z" fill="#444"/></svg>
<svg class="a" style="left:663.7px;top:72.7px;width:12px;height:12px;" viewBox="0 0 12 12"><path d="M.500 4h6V1.500L11.500 6 6.500 10.500V8h-6z" fill="none" stroke="#444" stroke-width="1"/></svg>
<svg class="a" style="left:677.5px;top:72.7px;width:12px;height:12px;" viewBox="0 0 12 12"><path d="M4 .500h4v6h2.500L6 11.500 1.500 6.500H4z" fill="none" stroke="#444" stroke-width="1"/></svg>
<svg class="a" style="left:692.5px;top:72.7px;width:12px;height:12px;" viewBox="0 0 12 12"><path d="M1 11V4c1.500-2 3.500-3 6-3v3.500h4V11z" fill="none" stroke="#444" stroke-width="1"/></svg>
<svg class="a" style="left:618.7px;top:87.7px;width:12px;height:12px;" viewBox="0 0 12 12"><path d="M1 2c2 3 5 6 8 7 2 .500 2-1.500 0-2-3-.500-6 2-5 4 .500 1 3 1 5 0" fill="none" stroke="#444" stroke-width="1"/></svg>
<svg class="a" style="left:634.5px;top:87.7px;width:12px;height:12px;" viewBox="0 0 12 12"><path d="M.500 2c5 0 9 3 10 9" fill="none" stroke="#444" stroke-width="1"/></svg>
<svg class="a" style="left:648.7px;top:87.7px;width:12px;height:12px;" viewBox="0 0 12 12"><path d="M.500 6c1.500-5 4-5 5.500 0s4 5 5.500 0" fill="none" stroke="#444" stroke-width="1" transform="translate(0 1)"/></svg>
<svg class="a" style="left:663.7px;top:87.7px;width:12px;height:12px;" viewBox="0 0 12 12"><path d="M7.500 .500c-2 0-2 1-2 2.500s-.500 2.500-2 3c1.500.500 2 1.500 2 3s0 2.500 2 2.500" fill="none" stroke="#444" stroke-width="1"/></svg>
<svg class="a" style="left:677.5px;top:87.7px;width:12px;height:12px;" viewBox="0 0 12 12"><path d="M4.500 .500c2 0 2 1 2 2.500s.500 2.500 2 3c-1.500.500-2 1.500-2 3s0 2.500-2 2.500" fill="none" stroke="#444" stroke-width="1"/></svg>
<svg class="a" style="left:692.5px;top:87.7px;width:12px;height:12px;" viewBox="0 0 12 12"><path d="M6 .800l1.600 3.600 3.900.400-2.900 2.600.800 3.800L6 9.300l-3.400 1.900.800-3.800L.500 4.800l3.900-.400z" fill="none" stroke="#444" stroke-width="1"/></svg>
<svg class="a" style="left:738.0px;top:55.0px;width:26px;height:24px;" viewBox="0 0 26 24"><rect x="2" y="2" width="9" height="8" fill="#fff" stroke="#666" stroke-width="1.300"/><rect x="7" y="7" width="12" height="10.500" fill="#fbd88a" stroke="#e0a92e" stroke-width="1.300"/><rect x="15" y="14.500" width="8.500" height="8" fill="#fff" stroke="#666" stroke-width="1.300"/></svg>
<div class="a" style="left:723.0px;top:81.9px;font-size:10px;line-height:12px;color:#333;letter-spacing:-0.32px;white-space:pre;">Упорядочить</div>
<svg class="a" style="left:748.5px;top:97.5px;width:5px;height:4px;" viewBox="0 0 5 4"><path d="M0.500 0.700L2.5 3.200L4.5 0.700" fill="none" stroke="#444" stroke-width="1.100"/></svg>
<svg class="a" style="left:792.0px;top:55.0px;width:26px;height:24px;" viewBox="0 0 26 24"><rect x="2" y="2" width="19" height="19" fill="#f5f5f5" stroke="#c4c4c4" stroke-width="1.300"/><path d="M12 20l9-11 3 2.500-9 10.500-4 1z" fill="#ececec" stroke="#c4c4c4" stroke-width="1.200"/></svg>
<div class="a" style="left:782.0px;top:81.9px;font-size:10px;line-height:12px;color:#b5b5b5;letter-spacing:-0.39px;white-space:pre;">Экспресс-</div>
<div class="a" style="left:787.0px;top:93.7px;font-size:10px;line-height:12px;color:#b5b5b5;letter-spacing:-0.52px;white-space:pre;">стили</div>
<svg class="a" style="left:814.5px;top:98.0px;width:5px;height:4px;" viewBox="0 0 5 4"><path d="M0.500 0.700L2.5 3.200L4.5 0.700" fill="none" stroke="#c2c2c2" stroke-width="1.100"/></svg>
<svg class="a" style="left:829.0px;top:55.0px;width:13px;height:13px;" viewBox="0 0 13 13"><path d="M3 7l4-4.500L10.500 6 7 9.500z" fill="none" stroke="#a8a8a8" stroke-width="1"/><path d="M6 1.500L7.500 3" stroke="#a8a8a8" stroke-width="1"/><rect x=".500" y="10.800" width="12" height="2" fill="#c4c4c4"/></svg>
<div class="a" style="left:844.0px;top:55.7px;font-size:10px;line-height:12px;color:#b8b8b8;letter-spacing:-0.55px;white-space:pre;">Заливка фигуры</div>
<svg class="a" style="left:915.5px;top:60.0px;width:5px;height:4px;" viewBox="0 0 5 4"><path d="M0.500 0.700L2.5 3.200L4.5 0.700" fill="none" stroke="#c8c8c8" stroke-width="1.100"/></svg>
<svg class="a" style="left:829.0px;top:73.0px;width:13px;height:13px;" viewBox="0 0 13 13"><path d="M1 1.500h9v7.500H1zM5 7l5.500-5.500 1.500 1.500L6.500 8.500 4.500 9z" fill="none" stroke="#a8a8a8" stroke-width="1"/><rect x=".500" y="10.800" width="12" height="2" fill="#c4c4c4"/></svg>
<div class="a" style="left:844.0px;top:74.2px;font-size:10px;line-height:12px;color:#b8b8b8;letter-spacing:-0.40px;white-space:pre;">Контур фигуры</div>
<svg class="a" style="left:911.5px;top:78.5px;width:5px;height:4px;" viewBox="0 0 5 4"><path d="M0.500 0.700L2.5 3.200L4.5 0.700" fill="none" stroke="#c8c8c8" stroke-width="1.100"/></svg>
<svg class="a" style="left:829.0px;top:91.0px;width:13px;height:12px;" viewBox="0 0 13 12"><path d="M1 7l4-5h7l-3.500 5zM1 7v2.500h7.500V7M8.500 9.500L12 4.500V2" fill="none" stroke="#a0a0a0" stroke-width="1"/></svg>
<div class="a" style="left:844.0px;top:91.9px;font-size:10px;line-height:12px;color:#b8b8b8;letter-spacing:-0.81px;white-space:pre;">Эффекты фигуры</div>
<svg class="a" style="left:919.0px;top:96.0px;width:5px;height:4px;" viewBox="0 0 5 4"><path d="M0.500 0.700L2.5 3.200L4.5 0.700" fill="none" stroke="#c8c8c8" stroke-width="1.100"/></svg>
<div class="a" style="left:746.5px;top:112.3px;font-size:8.5px;line-height:11px;color:#5a5a5a;letter-spacing:-0.51px;white-space:pre;">Рисование</div>
<svg class="a" style="left:927.0px;top:114.5px;width:7px;height:7px;" viewBox="0 0 7 7"><path d="M.500 .500h4M.500 .500v4M3 3l3 3M6 3.500V6H3.500" fill="none" stroke="#888" stroke-width=".9"/></svg>
<svg class="a" style="left:945.0px;top:54.5px;width:14px;height:14px;" viewBox="0 0 14 14"><circle cx="8.300" cy="5.300" r="4" fill="none" stroke="#555" stroke-width="1.200"/><path d="M5.500 8.300L1 13" stroke="#555" stroke-width="1.400"/></svg>
<div class="a" style="left:960.5px;top:55.7px;font-size:10px;line-height:12px;color:#333;letter-spacing:-0.61px;white-space:pre;">Найти</div>
<svg class="a" style="left:944.0px;top:72.0px;width:14px;height:14px;" viewBox="0 0 14 14"><text x="5.500" y="6" font-size="6.500" fill="#c2314d" font-family="Liberation Sans,sans-serif">b</text><text x="8.500" y="13" font-size="6.500" fill="#2b6cb8" font-family="Liberation Sans,sans-serif">c</text><path d="M4.500 5.500C2 6 1.500 9.500 4.500 11M3 10.500l1.700.600-.500-1.800" fill="none" stroke="#2b6cb8" stroke-width="1"/></svg>
<div class="a" style="left:960.5px;top:74.2px;font-size:10px;line-height:12px;color:#333;letter-spacing:-0.55px;white-space:pre;">Заменить</div>
<svg class="a" style="left:1009.5px;top:78.5px;width:5px;height:4px;" viewBox="0 0 5 4"><path d="M0.500 0.700L2.5 3.200L4.5 0.700" fill="none" stroke="#444" stroke-width="1.100"/></svg>
<svg class="a" style="left:945.0px;top:90.0px;width:12px;height:14px;" viewBox="0 0 12 14"><path d="M2 1v10l2.500-2.300 1.800 4 1.500-.700-1.800-3.800H9.500z" fill="#fff" stroke="#444" stroke-width="1"/></svg>
<div class="a" style="left:960.5px;top:91.9px;font-size:10px;line-height:12px;color:#333;letter-spacing:-0.77px;white-space:pre;">Выделить</div>
<svg class="a" style="left:1004.5px;top:96.0px;width:5px;height:4px;" viewBox="0 0 5 4"><path d="M0.500 0.700L2.5 3.200L4.5 0.700" fill="none" stroke="#444" stroke-width="1.100"/></svg>
<div class="a" style="left:950.5px;top:112.3px;font-size:8.5px;line-height:11px;color:#5a5a5a;letter-spacing:-0.38px;white-space:pre;">Редактирование</div>
<svg class="a" style="left:1035.0px;top:55.0px;width:26px;height:24px;" viewBox="0 0 26 24"><path d="M5 3h11l3 3v15H5z" fill="none" stroke="#666" stroke-width="1.200"/><rect x="1" y="4" width="13" height="7" fill="#e5483a"/><text x="2" y="10" font-size="6" font-weight="bold" fill="#fff" font-family="Liberation Sans,sans-serif">PDF</text><circle cx="19.500" cy="18" r="4.500" fill="#f3f3f3" stroke="#666" stroke-width="1.100"/><path d="M19.500 15.500v5M17 18h5" stroke="#666" stroke-width="1.100"/></svg>
<div class="a" style="left:1033.7px;top:81.7px;font-size:10px;line-height:12px;color:#333;letter-spacing:-0.54px;white-space:pre;">Create</div>
<div class="a" style="left:1039.5px;top:93.7px;font-size:10px;line-height:12px;color:#333;letter-spacing:-1.50px;white-space:pre;">PDF</div>
<svg class="a" style="left:1068.0px;top:55.0px;width:24px;height:24px;" viewBox="0 0 24 24"><path d="M11 2l8 6-3 4H8z" fill="none" stroke="#777" stroke-width="1.200"/><path d="M8 12L3 21l9-3.500 4-5.500" fill="none" stroke="#d0564a" stroke-width="1.200"/><circle cx="8.500" cy="16" r="1.300" fill="none" stroke="#d0564a" stroke-width="1"/></svg>
<div class="a" style="left:1070.5px;top:81.7px;font-size:10px;line-height:12px;color:#333;letter-spacing:-0.63px;white-space:pre;">Sign</div>
<div class="a" style="left:1047.0px;top:112.3px;font-size:8.5px;line-height:11px;color:#5a5a5a;letter-spacing:-0.96px;white-space:pre;">WPS PDF</div>
<svg class="a" style="left:1170.5px;top:115.0px;width:9px;height:6px;" viewBox="0 0 9 6"><path d="M.800 5L4.500 1.200 8.200 5" fill="none" stroke="#444" stroke-width="1.300"/></svg>
<div class="a" style="left:0.0px;top:127.5px;width:1185.0px;height:491.5px;background:#e6e6e6;"></div>
<div class="a" style="left:172.0px;top:127.0px;width:12.5px;height:491.5px;background:#dcdcdc;"></div>
<div class="a" style="left:172.0px;top:127.0px;width:12.5px;height:9.5px;background:#fff;"></div>
<div class="a" style="left:172.0px;top:608.5px;width:12.5px;height:10.5px;background:#fff;"></div>
<div class="a" style="left:172.5px;top:137.0px;width:11.5px;height:80.0px;background:#fff;border:1px solid #e2e2e2;"></div>
<svg class="a" style="left:175.5px;top:129.0px;width:6px;height:5px;" viewBox="0 0 6 5"><path d="M.500 4L3 1l2.500 3z" fill="#666"/></svg>
<svg class="a" style="left:175.5px;top:611.5px;width:6px;height:5px;" viewBox="0 0 6 5"><path d="M.500 1L3 4l2.500-3z" fill="#666"/></svg>
<div class="a" style="left:186.5px;top:127.5px;width:1.0px;height:491.5px;background:#d4d4d4;"></div>
<div class="a" style="left:9.5px;top:137.0px;font-size:11.5px;line-height:14px;color:#c43e1c;letter-spacing:-0.40px;white-space:pre;">1</div>
<div class="a" style="left:9.5px;top:249.0px;font-size:11.5px;line-height:14px;color:#666;letter-spacing:-0.40px;white-space:pre;">2</div>
<div class="a" style="left:9.5px;top:361.0px;font-size:11.5px;line-height:14px;color:#666;letter-spacing:-0.40px;white-space:pre;">3</div>
<div class="a" style="left:9.5px;top:473.0px;font-size:11.5px;line-height:14px;color:#666;letter-spacing:-0.40px;white-space:pre;">4</div>
<div class="a" style="left:9.5px;top:585.0px;font-size:11.5px;line-height:14px;color:#666;letter-spacing:-0.40px;white-space:pre;">5</div>
<div class="a" style="left:27px;top:252px;width:130px;height:97px;background:#fff;border:1px solid #dadada;overflow:hidden;font-family:'Liberation Serif',serif;color:#333">
<div class="a" style="left:0;top:4.5px;width:128px;text-align:center;font-size:5.400px;line-height:6.500px;font-weight:bold;color:#222;white-space:nowrap">Форми узагальнення результатів наукового<br>дослідження</div>
<div class="a" style="left:8px;top:23.500px;width:113px;font-size:4.500px;line-height:5.950px;text-align:justify;color:#8a8a8a">Заключна стадія наукового процесу завершується систематизацією результатів, які включають: нові гіпотези, висновки та рекомендації, науковий експеримент, коригування попередніх пропозицій, літературне викладення дослідження.</div>
<div class="a" style="left:8px;top:61.800px;width:113px;font-size:4.500px;line-height:5.950px;text-align:justify;color:#8a8a8a"><b style="color:#333">Форми</b> літературного викладення: реферат, стаття, монографія, звіт про виконану НДР, дисертація.</div>
</div>
<div class="a" style="left:27px;top:364px;width:130px;height:97px;background:#fff;border:1px solid #dadada;overflow:hidden;font-family:'Liberation Serif',serif;color:#333">
<div class="a" style="left:0;top:4.5px;width:128px;text-align:center;font-size:5.400px;line-height:6.500px;font-weight:bold;color:#222;white-space:nowrap">Форми узагальнення результатів наукового<br>дослідження</div>
<div class="a" style="left:8px;top:24px;width:113px;font-size:3.300px;line-height:3.900px;text-align:justify;color:#777"><b style="color:#333">Реферат</b> Реферат – коротке усне або письмове викладення наукової праці, результатів вивчення проблеми. Науковий реферат буває інформативним та розширеним, в якому викладаються погляди автора. Для написання реферату необхідно відібрати джерела, ознайомитися з ними, скласти план, написати текст і оформити його відповідно до вимог. Реферат – коротке усне або письмове викладення наукової праці, результатів вивчення проблеми. Науковий реферат буває інформативним та розширеним, в якому викладаються погляди автора. Для нап<br><b style="color:#333">Інформативний реферат</b> Реферат – коротке усне або письмове викладення наукової праці, результатів вивчення проблеми. Науковий реферат буває інформативним та розширеним, в якому викладаються погляди автора. Для написання реферату необхідно відібрати джерела, ознайомитися з ними, скласти план, написати текст і оформити його відповідно до вимог. Реферат – коротке усне або письмове викладення наукової праці, результатів вивчення проблеми. Науковий реферат буває інф</div>
</div>
<div class="a" style="left:27px;top:476px;width:130px;height:97px;background:#fff;border:1px solid #dadada;overflow:hidden;font-family:'Liberation Serif',serif;color:#333">
<div class="a" style="left:0;top:4.5px;width:128px;text-align:center;font-size:5.400px;line-height:6.500px;font-weight:bold;color:#222;white-space:nowrap">Форми узагальнення результатів наукового<br>дослідження</div>
<div class="a" style="left:8px;top:24px;width:113px;font-size:3.300px;line-height:3.900px;text-align:justify;color:#777"><b style="color:#333">Наукова стаття</b> – Реферат – коротке усне або письмове викладення наукової праці, результатів вивчення проблеми. Науковий реферат буває інформативним та розширеним, в якому викладаються погляди автора. Для написання реферату необхідно відібрати джерела, ознайомитися з ними, скла<br>Реферат – коротке усне або письмове викладення наукової праці, результатів вивчення проблеми. Науковий реферат буває інформативним та розширеним, в якому викладаються погляди автора. Для написання реферату необхідно відібрати джер<br>Реферат – коротке усне або письмове викладення наукової праці, результатів вивчення проблеми. Науковий реферат буває інформативним та розширеним, в якому викладаються погляди автора. Для написання реферату необхідно відібрати джерела, ознайомитися з ними, скласти план, написати текст і оформити його відповідно до вимог. Реферат – коротке усне або письмове викладення наукової прац</div>
</div>
<div class="a" style="left:27px;top:588px;width:130px;height:40px;background:#fff;border:1px solid #dadada;overflow:hidden;font-family:'Liberation Serif',serif;color:#333">
<div class="a" style="left:0;top:4.5px;width:128px;text-align:center;font-size:5.400px;line-height:6.500px;font-weight:bold;color:#222;white-space:nowrap">Форми узагальнення результатів наукового<br>дослідження</div>
<div class="a" style="left:8px;top:24px;width:113px;font-size:3.300px;line-height:3.900px;text-align:justify;color:#777"><b style="color:#333">Монографія</b> – Реферат – коротке усне або письмове викладення наукової праці, результатів вивчення проблеми. Науковий реферат буває інформативним та розширеним, в якому викладаються погляди автора. Для написання реф</div>
</div>
<div class="a" style="left:1173.5px;top:127.0px;width:11.5px;height:411.0px;background:#d9d9d9;"></div>
<div class="a" style="left:1173.5px;top:127.0px;width:11.5px;height:10.5px;background:#fff;"></div>
<svg class="a" style="left:1176.5px;top:130.0px;width:6px;height:5px;" viewBox="0 0 6 5"><path d="M.300 4.500L3 1l2.700 3.500z" fill="#666"/></svg>
<div class="a" style="left:1173.5px;top:138.0px;width:11.5px;height:14.0px;background:#fff;border:1px solid #e0e0e0;"></div>
<div class="a" style="left:1173.5px;top:538.0px;width:11.5px;height:10.0px;background:#fff;"></div>
<svg class="a" style="left:1176.5px;top:541.0px;width:6px;height:5px;" viewBox="0 0 6 5"><path d="M.300 .500L3 4 5.700 .500z" fill="#555"/></svg>
<svg class="a" style="left:1176.0px;top:552.5px;width:7px;height:7px;" viewBox="0 0 7 7"><path d="M.800 3.500L3.500 .800 6.200 3.500zM.800 6.500L3.500 3.800 6.200 6.500z" fill="#555"/></svg>
<svg class="a" style="left:1176.0px;top:564.5px;width:7px;height:7px;" viewBox="0 0 7 7"><path d="M.800 .500L3.500 3.200 6.200 .500zM.800 3.500L3.500 6.200 6.200 3.500z" fill="#555"/></svg>
<div class="a" style="left:380px;top:132.5px;width:600px;height:448.500px;background:#fff;box-shadow:0 0 2px rgba(0,0,0,.25);overflow:hidden"><div class="a" style="left:62.0px;top:40.5px;font-family:'Liberation Serif',serif;font-size:26.6px;line-height:32px;letter-spacing:0.01px;white-space:pre;color:#111;font-weight:bold;text-decoration:underline;text-decoration-thickness:1.200px;text-underline-offset:2.500px;">Оформлення результатів досліджень у</div>
<div class="a" style="left:155.5px;top:71.0px;font-family:'Liberation Serif',serif;font-size:26.6px;line-height:32px;letter-spacing:-0.02px;white-space:pre;color:#111;font-weight:bold;text-decoration:underline;text-decoration-thickness:1.200px;text-underline-offset:2.500px;">вигляді наукових робіт</div>
<div class="a" style="left:62.0px;top:72.0px;width:154.0px;height:2px;background:repeating-linear-gradient(90deg,#e06666 0 2px,rgba(224,102,102,.35) 2px 4px)"></div>
<div class="a" style="left:227.0px;top:72.0px;width:136.0px;height:2px;background:repeating-linear-gradient(90deg,#e06666 0 2px,rgba(224,102,102,.35) 2px 4px)"></div>
<div class="a" style="left:155.5px;top:102.5px;width:85.5px;height:2px;background:repeating-linear-gradient(90deg,#e06666 0 2px,rgba(224,102,102,.35) 2px 4px)"></div>
<div class="a" style="left:252.0px;top:102.5px;width:106.0px;height:2px;background:repeating-linear-gradient(90deg,#e06666 0 2px,rgba(224,102,102,.35) 2px 4px)"></div>
<div class="a" style="left:368.0px;top:102.5px;width:64.0px;height:2px;background:repeating-linear-gradient(90deg,#e06666 0 2px,rgba(224,102,102,.35) 2px 4px)"></div>
<div class="a" style="left:272.0px;top:125.5px;font-size:23.8px;line-height:30px;color:#222;letter-spacing:-0.09px;white-space:pre;">План</div>
<div class="a" style="left:37.5px;top:162.1px;font-family:'Liberation Serif',serif;font-size:23.27px;line-height:28px;letter-spacing:-0.48px;white-space:pre;color:#111;">1.</div>
<div class="a" style="left:72.0px;top:162.1px;font-family:'Liberation Serif',serif;font-size:23.27px;line-height:28px;letter-spacing:0.00px;white-space:pre;color:#111;">Форми</div>
<div class="a" style="left:167.5px;top:162.1px;font-family:'Liberation Serif',serif;font-size:23.27px;line-height:28px;letter-spacing:0.00px;white-space:pre;color:#111;">узагальнення</div>
<div class="a" style="left:326.3px;top:162.1px;font-family:'Liberation Serif',serif;font-size:23.27px;line-height:28px;letter-spacing:0.00px;white-space:pre;color:#111;">результатів</div>
<div class="a" style="left:463.9px;top:162.1px;font-family:'Liberation Serif',serif;font-size:23.27px;line-height:28px;letter-spacing:-0.00px;white-space:pre;color:#111;">наукового</div>
<div class="a" style="left:72.0px;top:190.1px;font-family:'Liberation Serif',serif;font-size:23.27px;line-height:28px;letter-spacing:0.00px;white-space:pre;color:#111;">дослідження</div>
<div class="a" style="left:37.5px;top:224.1px;font-family:'Liberation Serif',serif;font-size:23.27px;line-height:28px;letter-spacing:-0.48px;white-space:pre;color:#111;">2.</div>
<div class="a" style="left:72.0px;top:224.1px;font-family:'Liberation Serif',serif;font-size:23.27px;line-height:28px;letter-spacing:-0.00px;white-space:pre;color:#111;">Методи</div>
<div class="a" style="left:172.1px;top:224.1px;font-family:'Liberation Serif',serif;font-size:23.27px;line-height:28px;letter-spacing:0.00px;white-space:pre;color:#111;">опрацювання</div>
<div class="a" style="left:328.9px;top:224.1px;font-family:'Liberation Serif',serif;font-size:23.27px;line-height:28px;letter-spacing:0.00px;white-space:pre;color:#111;">результатів</div>
<div class="a" style="left:463.9px;top:224.1px;font-family:'Liberation Serif',serif;font-size:23.27px;line-height:28px;letter-spacing:-0.00px;white-space:pre;color:#111;">наукового</div>
<div class="a" style="left:72.0px;top:252.1px;font-family:'Liberation Serif',serif;font-size:23.27px;line-height:28px;letter-spacing:0.00px;white-space:pre;color:#111;">дослідження</div>
<div class="a" style="left:37.5px;top:284.1px;font-family:'Liberation Serif',serif;font-size:23.27px;line-height:28px;letter-spacing:-0.48px;white-space:pre;color:#111;">3.</div>
<div class="a" style="left:72.0px;top:284.1px;font-family:'Liberation Serif',serif;font-size:23.27px;line-height:28px;letter-spacing:0.00px;white-space:pre;color:#111;">Складання списку літературних джерел</div>
<div class="a" style="left:37.5px;top:318.6px;font-family:'Liberation Serif',serif;font-size:23.27px;line-height:28px;letter-spacing:-0.48px;white-space:pre;color:#111;">4.</div>
<div class="a" style="left:72.0px;top:318.6px;font-family:'Liberation Serif',serif;font-size:23.27px;line-height:28px;letter-spacing:-0.00px;white-space:pre;color:#111;">Завершення</div>
<div class="a" style="left:227.0px;top:318.6px;font-family:'Liberation Serif',serif;font-size:23.27px;line-height:28px;letter-spacing:0.00px;white-space:pre;color:#111;">і</div>
<div class="a" style="left:269.7px;top:318.6px;font-family:'Liberation Serif',serif;font-size:23.27px;line-height:28px;letter-spacing:0.00px;white-space:pre;color:#111;">представлення</div>
<div class="a" style="left:451.3px;top:318.6px;font-family:'Liberation Serif',serif;font-size:23.27px;line-height:28px;letter-spacing:0.00px;white-space:pre;color:#111;">результатів</div>
<div class="a" style="left:72.0px;top:346.6px;font-family:'Liberation Serif',serif;font-size:23.27px;line-height:28px;letter-spacing:0.00px;white-space:pre;color:#111;">наукового дослідження</div></div>
<div class="a" style="left:25.5px;top:137px;width:133px;height:101px;background:#fff;border:2px solid #c8502f;overflow:hidden"><div class="a" style="left:0;top:0;width:600px;height:448.500px;transform:scale(.2150);transform-origin:0 0"><div class="a" style="left:62.0px;top:40.5px;font-family:'Liberation Serif',serif;font-size:26.6px;line-height:32px;letter-spacing:0.01px;white-space:pre;color:#111;font-weight:bold;text-decoration:underline;text-decoration-thickness:1.200px;text-underline-offset:2.500px;">Оформлення результатів досліджень у</div>
<div class="a" style="left:155.5px;top:71.0px;font-family:'Liberation Serif',serif;font-size:26.6px;line-height:32px;letter-spacing:-0.02px;white-space:pre;color:#111;font-weight:bold;text-decoration:underline;text-decoration-thickness:1.200px;text-underline-offset:2.500px;">вигляді наукових робіт</div>
<div class="a" style="left:62.0px;top:72.0px;width:154.0px;height:2px;background:repeating-linear-gradient(90deg,#e06666 0 2px,rgba(224,102,102,.35) 2px 4px)"></div>
<div class="a" style="left:227.0px;top:72.0px;width:136.0px;height:2px;background:repeating-linear-gradient(90deg,#e06666 0 2px,rgba(224,102,102,.35) 2px 4px)"></div>
<div class="a" style="left:155.5px;top:102.5px;width:85.5px;height:2px;background:repeating-linear-gradient(90deg,#e06666 0 2px,rgba(224,102,102,.35) 2px 4px)"></div>
<div class="a" style="left:252.0px;top:102.5px;width:106.0px;height:2px;background:repeating-linear-gradient(90deg,#e06666 0 2px,rgba(224,102,102,.35) 2px 4px)"></div>
<div class="a" style="left:368.0px;top:102.5px;width:64.0px;height:2px;background:repeating-linear-gradient(90deg,#e06666 0 2px,rgba(224,102,102,.35) 2px 4px)"></div>
<div class="a" style="left:272.0px;top:125.5px;font-size:23.8px;line-height:30px;color:#222;letter-spacing:-0.09px;white-space:pre;">План</div>
<div class="a" style="left:37.5px;top:162.1px;font-family:'Liberation Serif',serif;font-size:23.27px;line-height:28px;letter-spacing:-0.48px;white-space:pre;color:#111;">1.</div>
<div class="a" style="left:72.0px;top:162.1px;font-family:'Liberation Serif',serif;font-size:23.27px;line-height:28px;letter-spacing:0.00px;white-space:pre;color:#111;">Форми</div>
<div class="a" style="left:167.5px;top:162.1px;font-family:'Liberation Serif',serif;font-size:23.27px;line-height:28px;letter-spacing:0.00px;white-space:pre;color:#111;">узагальнення</div>
<div class="a" style="left:326.3px;top:162.1px;font-family:'Liberation Serif',serif;font-size:23.27px;line-height:28px;letter-spacing:0.00px;white-space:pre;color:#111;">результатів</div>
<div class="a" style="left:463.9px;top:162.1px;font-family:'Liberation Serif',serif;font-size:23.27px;line-height:28px;letter-spacing:-0.00px;white-space:pre;color:#111;">наукового</div>
<div class="a" style="left:72.0px;top:190.1px;font-family:'Liberation Serif',serif;font-size:23.27px;line-height:28px;letter-spacing:0.00px;white-space:pre;color:#111;">дослідження</div>
<div class="a" style="left:37.5px;top:224.1px;font-family:'Liberation Serif',serif;font-size:23.27px;line-height:28px;letter-spacing:-0.48px;white-space:pre;color:#111;">2.</div>
<div class="a" style="left:72.0px;top:224.1px;font-family:'Liberation Serif',serif;font-size:23.27px;line-height:28px;letter-spacing:-0.00px;white-space:pre;color:#111;">Методи</div>
<div class="a" style="left:172.1px;top:224.1px;font-family:'Liberation Serif',serif;font-size:23.27px;line-height:28px;letter-spacing:0.00px;white-space:pre;color:#111;">опрацювання</div>
<div class="a" style="left:328.9px;top:224.1px;font-family:'Liberation Serif',serif;font-size:23.27px;line-height:28px;letter-spacing:0.00px;white-space:pre;color:#111;">результатів</div>
<div class="a" style="left:463.9px;top:224.1px;font-family:'Liberation Serif',serif;font-size:23.27px;line-height:28px;letter-spacing:-0.00px;white-space:pre;color:#111;">наукового</div>
<div class="a" style="left:72.0px;top:252.1px;font-family:'Liberation Serif',serif;font-size:23.27px;line-height:28px;letter-spacing:0.00px;white-space:pre;color:#111;">дослідження</div>
<div class="a" style="left:37.5px;top:284.1px;font-family:'Liberation Serif',serif;font-size:23.27px;line-height:28px;letter-spacing:-0.48px;white-space:pre;color:#111;">3.</div>
<div class="a" style="left:72.0px;top:284.1px;font-family:'Liberation Serif',serif;font-size:23.27px;line-height:28px;letter-spacing:0.00px;white-space:pre;color:#111;">Складання списку літературних джерел</div>
<div class="a" style="left:37.5px;top:318.6px;font-family:'Liberation Serif',serif;font-size:23.27px;line-height:28px;letter-spacing:-0.48px;white-space:pre;color:#111;">4.</div>
<div class="a" style="left:72.0px;top:318.6px;font-family:'Liberation Serif',serif;font-size:23.27px;line-height:28px;letter-spacing:-0.00px;white-space:pre;color:#111;">Завершення</div>
<div class="a" style="left:227.0px;top:318.6px;font-family:'Liberation Serif',serif;font-size:23.27px;line-height:28px;letter-spacing:0.00px;white-space:pre;color:#111;">і</div>
<div class="a" style="left:269.7px;top:318.6px;font-family:'Liberation Serif',serif;font-size:23.27px;line-height:28px;letter-spacing:0.00px;white-space:pre;color:#111;">представлення</div>
<div class="a" style="left:451.3px;top:318.6px;font-family:'Liberation Serif',serif;font-size:23.27px;line-height:28px;letter-spacing:0.00px;white-space:pre;color:#111;">результатів</div>
<div class="a" style="left:72.0px;top:346.6px;font-family:'Liberation Serif',serif;font-size:23.27px;line-height:28px;letter-spacing:0.00px;white-space:pre;color:#111;">наукового дослідження</div></div></div>
<div class="a" style="left:188.0px;top:591.0px;width:997.0px;height:1.0px;background:#cfcfcf;"></div>
<div class="a" style="left:195.0px;top:596.9px;font-size:10.5px;line-height:13px;color:#666;letter-spacing:0.42px;white-space:pre;">Щелкните, чтобы добавить заметки</div>
<svg class="a" style="left:575.0px;top:599.0px;width:9px;height:14px;" viewBox="0 0 9 14"><path d="M1 1v10l2.500-2.300 1.700 3.800 1.400-.600-1.700-3.700H8.500z" fill="#fff" stroke="#333" stroke-width=".9"/></svg>
<div class="a" style="left:0.0px;top:619.0px;width:1185.0px;height:17.0px;background:#f3f3f3;border-top:1px solid #dcdcdc;"></div>
<div class="a" style="left:6.0px;top:622.3px;font-size:8.5px;line-height:11px;color:#555;letter-spacing:-0.34px;white-space:pre;">Слайд 1 из 26</div>
<div class="a" style="left:82.0px;top:622.3px;font-size:8.5px;line-height:11px;color:#555;letter-spacing:-0.23px;white-space:pre;">украинский</div>
<svg class="a" style="left:778.0px;top:621.0px;width:14px;height:12px;" viewBox="0 0 14 12"><path d="M4.500 3.500L7 1l2.500 2.500" fill="none" stroke="#666" stroke-width="1"/><path d="M1 6h12M1 8.500h12M1 11h12" stroke="#666" stroke-width="1"/></svg>
<div class="a" style="left:791.5px;top:622.6px;font-size:8.5px;line-height:11px;color:#555;letter-spacing:-0.36px;white-space:pre;">Заметки</div>
<svg class="a" style="left:836.0px;top:621.0px;width:13px;height:13px;" viewBox="0 0 13 13"><path d="M1 1h11v7.500H5.500L3 11.500V8.500H1z" fill="none" stroke="#666" stroke-width="1.100"/></svg>
<div class="a" style="left:849.7px;top:622.6px;font-size:8.5px;line-height:11px;color:#555;letter-spacing:-0.28px;white-space:pre;">Примечания</div>
<div class="a" style="left:911.0px;top:619.5px;width:30.5px;height:15.5px;background:#d2d2d2;"></div>
<svg class="a" style="left:920.0px;top:622.0px;width:12px;height:10px;" viewBox="0 0 12 10"><rect x=".600" y=".600" width="10.800" height="8.800" fill="none" stroke="#555" stroke-width="1.100"/><path d="M3.500 .600v8.800M5.500 3h4M5.500 5.500h4" stroke="#555" stroke-width="1"/></svg>
<svg class="a" style="left:951.0px;top:622.0px;width:12px;height:10px;" viewBox="0 0 12 10"><g fill="none" stroke="#666" stroke-width="1"><rect x=".500" y=".500" width="4" height="3.500"/><rect x="7" y=".500" width="4" height="3.500"/><rect x=".500" y="6" width="4" height="3.500"/><rect x="7" y="6" width="4" height="3.500"/></g></svg>
<svg class="a" style="left:981.0px;top:622.0px;width:12px;height:10px;" viewBox="0 0 12 10"><path d="M.500 1h5v8h-5zM6.500 1h5v8h-5zM1.500 3h3M1.500 5h3M7.500 3h3M7.500 5h3" fill="none" stroke="#666" stroke-width="1"/></svg>
<svg class="a" style="left:1013.0px;top:621.0px;width:12px;height:12px;" viewBox="0 0 12 12"><path d="M.500 1h11M1.500 1v6h9V1M6 7v3M3.500 10.500h5" fill="none" stroke="#666" stroke-width="1"/></svg>
<div class="a" style="left:1038.0px;top:627.0px;width:6.0px;height:1.0px;background:#888;"></div>
<div class="a" style="left:1048.0px;top:627.0px;width:77.0px;height:1.0px;background:#bdbdbd;"></div>
<div class="a" style="left:1078.0px;top:623.0px;width:2.5px;height:9.0px;background:#666;"></div>
<div class="a" style="left:1087.0px;top:625.0px;width:1.0px;height:5.0px;background:#bdbdbd;"></div>
<svg class="a" style="left:1129.0px;top:624.0px;width:7px;height:7px;" viewBox="0 0 7 7"><path d="M3.500 .500v6M.500 3.500h6" stroke="#888" stroke-width="1"/></svg>
<svg class="a" style="left:1170.0px;top:621.0px;width:12px;height:12px;" viewBox="0 0 12 12"><rect x="3" y="3" width="6" height="6" fill="none" stroke="#666" stroke-width="1"/><path d="M6 .500V3M6 9v2.500M.500 6H3M9 6h2.500" stroke="#666" stroke-width="1"/></svg>
</div></div>
<div class="a" style="left:1153.0px;top:668.5px;width:52.0px;height:52.0px;background:#303134;border-radius:26px;box-shadow:0 1px 3px rgba(0,0,0,.4);"></div>
<svg class="a" style="left:1165.0px;top:681.0px;width:28px;height:28px;" viewBox="0 0 28 28"><path d="M5 23L23 5M14.500 5H23v8.500M5 14.500V23h8.500" fill="none" stroke="#e8eaed" stroke-width="3"/></svg>
<svg width="0" height="0" style="position:absolute"><defs><filter id="bl1" x="-10%" y="-10%" width="120%" height="120%"><feGaussianBlur stdDeviation="1.2"/></filter><filter id="bl2" x="-10%" y="-10%" width="120%" height="120%"><feGaussianBlur stdDeviation="2.500"/></filter><filter id="bl0" x="-5%" y="-5%" width="110%" height="110%"><feGaussianBlur stdDeviation=".6"/></filter></defs></svg>
<div class="a" style="left:1232.0px;top:179.0px;width:268.5px;height:222.5px;background:radial-gradient(ellipse 75% 80% at 50% 46%,#5c7a7c 0%,#4f6e71 35%,#3a595f 65%,#294850 85%,#213e46 100%);border-radius:14px;"></div>
<svg class="a" style="left:1324.0px;top:247.0px;width:86px;height:86px;" viewBox="0 0 86 86"><circle cx="43" cy="43" r="41" fill="#fff" stroke="#2f3f86" stroke-width="1.800"/>
<path d="M9.0 49.0A34.5 34.5 0 1 1 77.0 49.0" fill="none" stroke="#3a4a8c" stroke-width="3" stroke-dasharray="1.300 .8" opacity=".8"/>
<path d="M18.3 67.7A35 35 0 0 0 67.7 67.7" fill="none" stroke="#3a4a8c" stroke-width="3" stroke-dasharray="1.300 .8" opacity=".8"/>
<g filter="url(#bl0)"><circle cx="36.500" cy="27.500" r="7.800" fill="#35c51f"/><circle cx="31.500" cy="29.500" r="4.500" fill="#35c51f"/><circle cx="36" cy="22.500" r="4.500" fill="#35c51f"/>
<circle cx="50" cy="27.500" r="7.800" fill="#fbc81c"/><circle cx="55" cy="29.500" r="4.500" fill="#fbc81c"/><circle cx="50.500" cy="22.500" r="4.500" fill="#fbc81c"/>
<circle cx="36.500" cy="41" r="7.800" fill="#1a1ec4"/><circle cx="31.500" cy="39" r="4.500" fill="#1a1ec4"/><circle cx="36.500" cy="46.500" r="4.500" fill="#1a1ec4"/>
<circle cx="50" cy="41" r="7.800" fill="#ee1c1c"/><circle cx="55" cy="39" r="4.500" fill="#ee1c1c"/><circle cx="50" cy="46.500" r="4.500" fill="#ee1c1c"/>
<circle cx="43.500" cy="31" r="2.300" fill="#1a1ec4"/><circle cx="48" cy="38" r="2.300" fill="#fbc81c"/><circle cx="40" cy="41" r="2" fill="#ee5b8c"/></g>
<path d="M12.500 48c2-1.500 6-1 10 2 5 3.500 12 6 15 10 2 3 1 8-1 13M16 51c3 3 9 7 16 8" fill="none" stroke="#59607a" stroke-width="1.100"/>
<path d="M73.500 48c-2-1.500-6-1-10 2-5 3.500-12 6-15 10-2 3-1 8 1 13M70 51c-3 3-9 7-16 8" fill="none" stroke="#59607a" stroke-width="1.100"/></svg>
<div class="a" style="left:1247.0px;top:367.2px;font-size:18px;line-height:22px;color:#fff;letter-spacing:-0.00px;white-space:pre;font-weight:bold;text-shadow:0 0 3px rgba(0,0,0,.45);">Кафедра теорії та мето...</div>
<div class="a" style="left:1514.0px;top:179.0px;width:267.5px;height:222.5px;background:#3c4043;border-radius:14px;"></div>
<svg class="a" style="left:1576.0px;top:179.0px;width:144px;height:223px;" viewBox="0 0 144 223"><g filter="url(#bl1)">
<rect x="-3" y="-3" width="150" height="230" fill="#e2dbca"/>
<rect x="-3" y="-3" width="150" height="40" fill="#dfd9cc"/>
<path d="M-3 40L147 28V70L-3 76z" fill="#e9e3d2"/>
<rect x="-3" y="74" width="19" height="70" fill="#b4733f"/>
<rect x="16" y="72" width="40" height="65" fill="#dfe2d8"/>
<rect x="20" y="80" width="15" height="14" fill="#6d9b62"/><rect x="21" y="100" width="14" height="14" fill="#7d8f86"/><rect x="22" y="120" width="13" height="12" fill="#7fa3a8"/>
<rect x="42" y="80" width="12" height="30" fill="#9aa89a"/>
<rect x="112" y="76" width="36" height="68" fill="#b9703a"/>
<rect x="1" y="64" width="7" height="10" fill="#2b2b2b"/>
<ellipse cx="48" cy="124" rx="13" ry="14" fill="#8a6650"/>
<path d="M14 138c6-8 20-8 26 0v45H10z" fill="#5b7fa8"/>
<path d="M-3 146c6-4 10 0 12 10v25H-3z" fill="#8a3fa8"/>
<path d="M-3 176h30v30H-3z" fill="#e6e6ea"/>
<path d="M120 140h28v85h-28z" fill="#b9844e"/>
<path d="M128 196h20v30h-20z" fill="#e8d6c0"/>
</g>
<g filter="url(#bl1)">
<path d="M52 80c0-26 12-41 32-41s31 14 31 40c0 20-3 40-6 62H58c-4-14-6-42-6-61z" fill="#4b4337"/>
<path d="M104 120c8 6 14 18 16 30l-14-6z" fill="#4b4337"/>
<path d="M56 86c2-20 12-30 26-30 16 0 27 10 28 30 1 22-8 46-27 47-17 1-29-22-27-47z" fill="#d8b4a0"/>
<path d="M70 130h28v22H70z" fill="#cfa690"/>
<path d="M62 81c5-2 11-2 16 0M90 81c5-2 11-2 16 0" stroke="#6a5446" stroke-width="1.800" fill="none"/>
<ellipse cx="71" cy="88" rx="6" ry="2" fill="#4a3a33"/><ellipse cx="97" cy="88" rx="6" ry="2" fill="#4a3a33"/>
<path d="M82 96c-1 6-2 10 0 12" stroke="#b98f7c" stroke-width="2" fill="none"/>
<path d="M74 120c6 3 12 3 18 0" stroke="#b0655f" stroke-width="3" fill="none"/>
<path d="M12 226c2-40 16-70 44-84 8 10 40 10 52-2 22 8 38 24 40 50v36z" fill="#17171c"/>
<path d="M2 226c8-16 30-18 44-10v10z" fill="#d9b09a"/>
</g></svg>
<div class="a" style="left:1744.5px;top:189.0px;width:26.0px;height:26.0px;background:#34363a;border-radius:13px;"></div>
<svg class="a" style="left:1748.5px;top:193.0px;width:18px;height:18px;" viewBox="0 0 18 18"><path d="M7 4.200a2 2 0 0 1 4 0v4.300a2 2 0 0 1-4 0z" fill="#e8eaed"/><path d="M4.500 8.500a4.500 4.500 0 0 0 9 0M9 13v2.500" fill="none" stroke="#e8eaed" stroke-width="1.400"/><path d="M2.500 2.500l13 13" stroke="#34363a" stroke-width="3.200"/><path d="M3 2.500l12.500 12.500" stroke="#e8eaed" stroke-width="1.400"/></svg>
<div class="a" style="left:1528.8px;top:367.2px;font-size:18px;line-height:22px;color:#fff;letter-spacing:-0.07px;white-space:pre;font-weight:bold;text-shadow:0 0 3px rgba(0,0,0,.45);">Настя Толокно</div>
<div class="a" style="left:1232.0px;top:416.0px;width:268.5px;height:222.0px;background:#3c4043;border-radius:14px;"></div>
<svg class="a" style="left:1297.0px;top:416.0px;width:138px;height:222px;" viewBox="0 0 138 222"><g filter="url(#bl1)">
<rect x="-3" y="-3" width="144" height="230" fill="#d6d4cf"/>
<path d="M-3 70L141 84v20L-3 104z" fill="#e2dcc6"/>
<rect x="-3" y="104" width="144" height="50" fill="#d9d4c2"/>
<rect x="10" y="98" width="26" height="46" fill="#b7792f"/>
<rect x="-3" y="108" width="12" height="34" fill="#c9b98f"/>
<rect x="92" y="108" width="50" height="48" fill="#d8dace"/>
<rect x="96" y="114" width="16" height="20" fill="#9aa58c"/><rect x="120" y="112" width="16" height="22" fill="#7f8078"/><circle cx="134" cy="120" r="5" fill="#efefef"/>
<rect x="98" y="136" width="14" height="14" fill="#c4c9b8"/>
</g>
<g filter="url(#bl1)">
<path d="M29 84c0-26 14-40 36-40 20 0 33 13 33 36 0 14-2 26-6 34H34c-4-10-5-20-5-30z" fill="#2d2a2c"/>
<path d="M88 112c8 4 12 14 12 26l-12-4z" fill="#3a3030"/>
<path d="M33 92c0-22 12-36 31-36s30 14 30 34c0 26-10 50-30 50S33 118 33 92z" fill="#d9b7aa"/>
<path d="M48 130h32v24H48z" fill="#cfa99a"/>
<path d="M40 79c5-2 11-2 16 0M71 79c5-2 11-2 16 0" stroke="#5a4640" stroke-width="1.800" fill="none"/>
<ellipse cx="48" cy="86" rx="6" ry="1.800" fill="#5a4540"/><ellipse cx="79" cy="86" rx="6" ry="1.800" fill="#5a4540"/>
<path d="M62 92c-1 6-2 11 2 13" stroke="#b8928a" stroke-width="2" fill="none"/>
<path d="M53 119c7 2 14 2 20 0" stroke="#b8807a" stroke-width="2.500" fill="none"/>
<path d="M-3 150c10-8 30-12 44-14 10 16 34 16 46 0 20 4 44 12 54 24v66H-3z" fill="#ebebf0"/>
<path d="M44 140c6 20 14 40 12 86h14c0-40 10-66 18-86-10 12-32 12-44 0z" fill="#d6b3a5"/>
<path d="M40 138c-8 10-14 24-16 40 12-6 22-14 30-22z" fill="#f6f6fa"/><path d="M90 138c8 10 14 24 16 40-12-6-22-14-30-22z" fill="#f6f6fa"/>
</g></svg>
<div class="a" style="left:1464.0px;top:425.0px;width:26.0px;height:26.0px;background:#34363a;border-radius:13px;"></div>
<svg class="a" style="left:1468.0px;top:429.0px;width:18px;height:18px;" viewBox="0 0 18 18"><path d="M7 4.200a2 2 0 0 1 4 0v4.300a2 2 0 0 1-4 0z" fill="#e8eaed"/><path d="M4.500 8.500a4.500 4.500 0 0 0 9 0M9 13v2.500" fill="none" stroke="#e8eaed" stroke-width="1.400"/><path d="M2.500 2.500l13 13" stroke="#34363a" stroke-width="3.200"/><path d="M3 2.500l12.500 12.500" stroke="#e8eaed" stroke-width="1.400"/></svg>
<div class="a" style="left:1247.0px;top:603.2px;font-size:18px;line-height:22px;color:#fff;letter-spacing:-0.04px;white-space:pre;font-weight:bold;text-shadow:0 0 3px rgba(0,0,0,.45);">Ілона КУЗЬМИЧ</div>
<div class="a" style="left:1514.0px;top:416.0px;width:267.5px;height:222.0px;background:#3c4043;border-radius:14px;border:2.500px solid #a8c7fa;"></div>
<svg class="a" style="left:1516.5px;top:450.0px;width:262.5px;height:151.5px;" viewBox="0 0 262.5 151.5"><g filter="url(#bl1)">
<rect x="-3" y="-3" width="270" height="160" fill="#e6e1d8"/>
<path d="M-3 -3h270v50L80 46 -3 20z" fill="#e9e9e9"/>
<path d="M90 8h20l-4 6H86zM240 14h26v10h-30z" fill="#fff"/>
<path d="M-3 20L80 46v70L-3 128z" fill="#ebe2d2"/>
<path d="M0 34l56 22v42L0 96z" fill="#2e5a55"/>
<path d="M30 22v14M27 26h6" stroke="#7a5a3a" stroke-width="1.500"/>
<rect x="80" y="44" width="190" height="70" fill="#ead4d2"/>
<rect x="92" y="50" width="36" height="52" fill="#f7f4f8"/><rect x="196" y="48" width="66" height="58" fill="#f8f5f9"/>
<path d="M80 44h190v8H80z" fill="#d8bdb8"/>
<rect x="80" y="100" width="190" height="18" fill="#cfc6be"/>
<path d="M-3 128l83-14h60v42H-3z" fill="#d9d3c8"/>
<ellipse cx="76" cy="114" rx="26" ry="5" fill="#9b6c58"/>
<path d="M56 96c0-10 20-12 22 0l2 16H56z" fill="#6e6659"/><circle cx="68" cy="84" r="5" fill="#8a6a58"/>
<path d="M84 96c2-10 20-10 22 0v14H84z" fill="#2c2a2c"/><circle cx="96" cy="86" r="5" fill="#3a3030"/>
<path d="M46 112h14l4 36H50zM66 118h8l2 30h-8z" fill="#3a3836"/>
<rect x="232" y="108" width="36" height="14" fill="#d8d8d4"/><rect x="236" y="122" width="32" height="30" fill="#3a3a3c"/>
</g>
<g filter="url(#bl1)">
<path d="M128 70c0-34 18-56 44-56 24 0 38 20 38 48 0 20 6 36 12 50l-30 14h-50l-18-14c4-12 4-26 4-42z" fill="#2a2126"/>
<path d="M146 64c2-18 12-26 26-26 16 0 24 12 24 30 0 22-8 40-24 40s-28-20-26-44z" fill="#d7aa9c"/>
<path d="M156 100h28v22h-28z" fill="#cf9f90"/>
<path d="M146 46c10-10 24-12 34-9 10 3 16 8 18 16-8-8-18-10-30-8-8 1-16 3-22 1z" fill="#2a2126"/>
<ellipse cx="160" cy="56" rx="10" ry="6.500" fill="none" stroke="#4a3a40" stroke-width="1.500"/><ellipse cx="186" cy="56" rx="9" ry="6.500" fill="none" stroke="#4a3a40" stroke-width="1.500"/>
<path d="M164 84c6 3 12 3 17 0" stroke="#b05a5a" stroke-width="2.500" fill="none"/>
<path d="M90 152c2-26 14-44 40-54 10 16 60 18 76 0 22 6 32 24 38 54z" fill="#e9dfe6"/>
<path d="M204 100c20 4 32 20 38 52h-30c-4-20-8-36-8-52z" fill="#ea6440"/>
<path d="M150 116c8 12 30 12 40 0l6 36h-48z" fill="#f07a3c"/>
<path d="M108 112c8 4 14 14 12 30-6 6-16 8-22 4 0-14 4-26 10-34z" fill="#e8503a"/>
<path d="M186 124c10 4 18 12 20 26h-22z" fill="#7fb4de"/>
<path d="M120 122c6 6 14 10 22 12l-4 18h-20z" fill="#f4b8b0"/>
<path d="M152 106c4 12 10 20 18 24 8-4 14-12 18-24-8 8-28 8-36 0z" fill="#d9a898"/>
</g></svg>
<div class="a" style="left:1528.8px;top:603.2px;font-size:18px;line-height:22px;color:#fff;letter-spacing:0.03px;white-space:pre;font-weight:bold;text-shadow:0 0 3px rgba(0,0,0,.45);">Людмила Мацук</div>
<div class="a" style="left:28.5px;top:766.2px;font-size:18px;line-height:22px;color:#fff;letter-spacing:0.09px;white-space:pre;font-weight:bold;">10:49</div>
<div class="a" style="left:89.5px;top:767.0px;width:1.5px;height:19.0px;background:#9aa0a6;"></div>
<div class="a" style="left:104.0px;top:766.2px;font-size:18px;line-height:22px;color:#fff;letter-spacing:0.71px;white-space:pre;font-weight:bold;">prr-krsg-pqn</div>
<div class="a" style="left:580.0px;top:748.5px;width:86.0px;height:40.0px;background:#26272a;border-radius:16px;"></div>
<div class="a" style="left:690.0px;top:748.5px;width:86.0px;height:40.0px;background:#26272a;border-radius:16px;"></div>
<div class="a" style="left:795.0px;top:748.5px;width:65.0px;height:40.0px;background:#a8c7fa;border-radius:16px;"></div>
<div class="a" style="left:872.0px;top:748.5px;width:68.0px;height:40.0px;background:#26272a;border-radius:16px;"></div>
<div class="a" style="left:947.0px;top:748.5px;width:65.0px;height:40.0px;background:#26272a;border-radius:16px;"></div>
<div class="a" style="left:1020.0px;top:748.5px;width:56.0px;height:40.0px;background:#26272a;border-radius:16px;"></div>
<div class="a" style="left:1086.0px;top:748.5px;width:54.0px;height:40.0px;background:#26272a;border-radius:16px;"></div>
<div class="a" style="left:1153.0px;top:748.5px;width:71.0px;height:40.0px;background:#dc362e;border-radius:16px;"></div>
<div class="a" style="left:570.0px;top:756.5px;width:663.0px;height:58.5px;background:#f6f6f6;border:1px solid #dcdcdc;box-shadow:0 1px 4px rgba(0,0,0,.5);"></div>
<div class="a" style="left:795.0px;top:757.5px;width:65.0px;height:46.0px;background:#fbfbfc;border-radius:0 0 12px 12px;"></div>
<svg class="a" style="left:636.0px;top:768.0px;width:20px;height:24px;" viewBox="0 0 20 24"><rect x="7" y="2" width="6" height="12" rx="3" fill="rgba(60,64,67,.07)"/><path d="M4 11a6 6 0 0 0 12 0M10 17v4" fill="none" stroke="rgba(60,64,67,.07)" stroke-width="2"/></svg>
<svg class="a" style="left:742.0px;top:770.0px;width:26px;height:20px;" viewBox="0 0 26 20"><rect x="2" y="3" width="15" height="14" rx="2" fill="none" stroke="rgba(60,64,67,.07)" stroke-width="2.200"/><path d="M17 8l6-4v12l-6-4z" fill="rgba(60,64,67,.07)"/></svg>
<svg class="a" style="left:815.0px;top:769.0px;width:26px;height:22px;" viewBox="0 0 26 22"><rect x="2" y="2" width="22" height="16" rx="2" fill="none" stroke="rgba(11,87,208,.10)" stroke-width="2.200"/><path d="M13 6l4 4h-2.500v4h-3v-4H9z" fill="rgba(11,87,208,.10)"/></svg>
<svg class="a" style="left:891.0px;top:769.0px;width:22px;height:22px;" viewBox="0 0 22 22"><circle cx="11" cy="11" r="9" fill="none" stroke="rgba(60,64,67,.07)" stroke-width="2.200"/><circle cx="7.500" cy="8.500" r="1.500" fill="rgba(60,64,67,.07)"/><circle cx="14.500" cy="8.500" r="1.500" fill="rgba(60,64,67,.07)"/><path d="M6.500 13a4.500 4.500 0 0 0 9 0z" fill="rgba(60,64,67,.07)"/></svg>
<svg class="a" style="left:965.0px;top:770.0px;width:24px;height:20px;" viewBox="0 0 24 20"><rect x="2" y="2" width="20" height="16" rx="2" fill="none" stroke="rgba(60,64,67,.07)" stroke-width="2.200"/><path d="M5 9h6M13 9h6M5 13h4M11 13h8" stroke="rgba(60,64,67,.07)" stroke-width="2"/></svg>
<svg class="a" style="left:1045.0px;top:768.0px;width:20px;height:22px;" viewBox="0 0 20 22"><path d="M3 8v8M8 3v17M13 6v12M18 9v6" stroke="rgba(60,64,67,.07)" stroke-width="2.200"/></svg>
<svg class="a" style="left:1113.0px;top:769.0px;width:6px;height:22px;" viewBox="0 0 6 22"><circle cx="3" cy="4" r="2" fill="rgba(60,64,67,.07)"/><circle cx="3" cy="11" r="2" fill="rgba(60,64,67,.07)"/><circle cx="3" cy="18" r="2" fill="rgba(60,64,67,.07)"/></svg>
<svg class="a" style="left:1176.0px;top:772.0px;width:28px;height:14px;" viewBox="0 0 28 14"><path d="M2 10c0-3 5-7 12-7s12 4 12 7v1.500c0 1-1 1.500-2 1.200l-4-1.200c-.8-.3-1-.8-1-1.500V8.500c-2-.8-8-.8-10 0V10c0 .7-.2 1.200-1 1.500l-4 1.200c-1 .3-2-.2-2-1.200z" fill="rgba(220,54,46,.07)"/></svg>
<div class="a" style="left:582.5px;top:779.5px;width:2.0px;height:14.0px;background:#c4c4c4;"></div>
<div class="a" style="left:586.5px;top:779.5px;width:2.0px;height:14.0px;background:#c4c4c4;"></div>
<div class="a" style="left:601.0px;top:778.1px;font-size:14.5px;line-height:18px;color:#333;letter-spacing:-0.16px;white-space:pre;">Приложение "meet.google.com" предоставило доступ к окну.</div>
<div class="a" style="left:1009.0px;top:763.0px;width:150.5px;height:45.0px;background:#0b57d0;border-radius:23px;"></div>
<div class="a" style="left:1027.5px;top:777.1px;font-size:15px;line-height:19px;color:#fff;letter-spacing:-0.53px;white-space:pre;font-weight:bold;">Закрыть доступ</div>
<div class="a" style="left:1172.5px;top:778.1px;font-size:14.5px;line-height:18px;color:#0b57d0;letter-spacing:-0.58px;white-space:pre;text-decoration:underline;">Скрыть</div>
<svg class="a" style="left:1576.0px;top:764.3px;width:26px;height:26px;" viewBox="0 0 26 26"><circle cx="13" cy="13" r="10.700" fill="none" stroke="#fff" stroke-width="2.500"/><rect x="11.700" y="11.700" width="2.600" height="6.800" fill="#fff"/><circle cx="13" cy="8.300" r="1.700" fill="#fff"/></svg>
<svg class="a" style="left:1630.0px;top:765.0px;width:30px;height:24px;" viewBox="0 0 30 24"><circle cx="11.600" cy="7.600" r="3.700" fill="none" stroke="#fff" stroke-width="2.400"/><path d="M2.300 21v-2c0-3 6-4.600 9.300-4.600s9.300 1.600 9.300 4.600v2z" fill="none" stroke="#fff" stroke-width="2.400" stroke-linejoin="round"/><path d="M17.500 2.900c3.500-1 6.500 1.500 6.500 4.700s-3 5.700-6.500 4.700c1.500-1.200 2.300-2.800 2.300-4.700s-.8-3.500-2.300-4.700zM22.500 13.800c3 .9 6 2.400 6 5.200v3.200h-5.200V19c0-2-.2-3.600-.8-5.200z" fill="#fff"/></svg>
<div class="a" style="left:1646.5px;top:737.8px;width:25.0px;height:25.0px;background:#5f6368;border-radius:13px;"></div>
<div class="a" style="left:1655.2px;top:742.3px;font-size:13.5px;line-height:17px;color:#fff;letter-spacing:0.09px;white-space:pre;font-weight:bold;">5</div>
<svg class="a" style="left:1688.0px;top:764.0px;width:28px;height:28px;" viewBox="0 0 28 28"><path d="M3 2.700h21.500v16.800H7.200L3 23z" fill="none" stroke="#fff" stroke-width="2.500" stroke-linejoin="miter"/><path d="M7 7.800h13.500M7 11.200h13.500M7 14.600h9" stroke="#fff" stroke-width="2"/></svg>
<svg class="a" style="left:1746.0px;top:766.0px;width:24px;height:24px;" viewBox="0 0 24 24"><circle cx="4.5" cy="4.3" r="2.600" fill="#fff"/><circle cx="4.5" cy="11.5" r="2.600" fill="#fff"/><circle cx="4.5" cy="18.7" r="2.600" fill="#fff"/><circle cx="11.8" cy="4.3" r="2.600" fill="#fff"/><circle cx="11.8" cy="11.5" r="2.600" fill="#fff"/><circle cx="11.8" cy="18.7" r="2.600" fill="#fff"/><circle cx="19.1" cy="4.3" r="2.600" fill="#fff"/><circle cx="19.1" cy="11.5" r="2.600" fill="#fff"/><circle cx="19.1" cy="18.7" r="2.600" fill="#fff"/></svg>
</div>
<!-- TASKBAR -->
<div id="taskbar" class="a">
<svg class="a" style="left:18.5px;top:14.5px;width:19px;height:19px;" viewBox="0 0 19 19"><path d="M0 2.700L7.800 1.600v7.500H0zM8.800 1.500L19 0v9.100H8.800zM0 10h7.800v7.500L0 16.400zM8.800 10H19v9L8.800 17.600z" fill="#fff"/></svg>
<div class="a" style="left:56.5px;top:0.5px;width:337.0px;height:46.5px;background:#f2f2f2;border:1px solid #cfd3d6;border-bottom:0;"></div>
<svg class="a" style="left:70.0px;top:13.0px;width:22px;height:22px;" viewBox="0 0 22 22"><circle cx="13.500" cy="8.500" r="6" fill="none" stroke="#222" stroke-width="1.700"/><path d="M9.300 12.700L2 20" stroke="#222" stroke-width="1.900"/></svg>
<div class="a" style="left:103.5px;top:13.2px;font-size:18.5px;line-height:23px;color:#3a3a3a;letter-spacing:-0.25px;white-space:pre;">Пошук</div>
<svg class="a" style="left:412.0px;top:13.5px;width:20px;height:21px;" viewBox="0 0 20 21"><path d="M1 2h11M1 19h11" stroke="#fff" stroke-width="1.600"/><rect x="1.800" y="5.500" width="9.500" height="10" fill="none" stroke="#fff" stroke-width="1.600"/><path d="M16.500 1v4M16.500 8v6M16.500 17v3" stroke="#fff" stroke-width="1.600"/></svg>
<svg class="a" style="left:468.0px;top:10.0px;width:28px;height:28px;" viewBox="0 0 28 28"><defs><linearGradient id="eg1" x1="0" y1="0" x2="1" y2="1"><stop offset="0" stop-color="#35c1f1"/><stop offset=".5" stop-color="#1b9de2"/><stop offset="1" stop-color="#0c59a4"/></linearGradient><linearGradient id="eg2" x1="0" y1="0" x2="1" y2="0"><stop offset="0" stop-color="#2fc06f"/><stop offset="1" stop-color="#b5e85a"/></linearGradient></defs><circle cx="14" cy="14" r="12.500" fill="url(#eg1)"/><path d="M2 12C3 5.500 8.500 1.500 14.500 1.500c7 0 12 5 12 10.500 0 3.500-3 5.500-6 5.500-2.500 0-3.500-1-3.500-2 0-1.300 1.200-1.500 1.200-3.500 0-2.500-2.500-4.500-5.700-4.500C7.500 7.500 3.500 10 2 12z" fill="url(#eg2)"/><path d="M10 14c0 6 4 10.500 10 10.500 2 0 3.700-.5 5-1.300-2.300 2.200-5.500 3.300-9 3.300C9.500 26.500 4 22 4 16c0-3.500 3-6 6.500-6-.3 1.200-.5 2.500-.5 4z" fill="#0f5fae"/><circle cx="9" cy="21" r="6.300" fill="#8c8c8c" stroke="#e6e6e6" stroke-width="1"/><circle cx="9" cy="19" r="2.300" fill="#e6e6e6"/><path d="M4.800 24.500c.7-2.500 2.300-3.300 4.200-3.300s3.500.8 4.200 3.300c-1.200 1.500-2.700 2.200-4.200 2.200s-3-.7-4.200-2.200z" fill="#e6e6e6"/></svg>
<svg class="a" style="left:526.0px;top:10.0px;width:27px;height:28px;" viewBox="0 0 27 28"><path d="M8.500 8V5.500c0-2 1.500-3 5-3s5 1 5 3V8" fill="none" stroke="#3aa0e8" stroke-width="1.800"/><path d="M2 8h23v15.500c0 1.500-1 2.500-2.500 2.500h-18C3 26 2 25 2 23.500z" fill="#f4f4f4"/><rect x="8.300" y="11.500" width="4.800" height="4.800" fill="#f25022"/><rect x="14" y="11.500" width="4.800" height="4.800" fill="#7fba00"/><rect x="8.300" y="17.200" width="4.800" height="4.800" fill="#00a4ef"/><rect x="14" y="17.200" width="4.800" height="4.800" fill="#ffb900"/></svg>
<svg class="a" style="left:584.0px;top:11.0px;width:28px;height:26px;" viewBox="0 0 28 26"><path d="M1 3.500c0-1 .7-1.500 1.500-1.500H10l2.500 3H25c1 0 1.500.7 1.500 1.500V8H1z" fill="#e8a820"/><path d="M1 7h25.500v14.500c0 1-.7 1.500-1.500 1.500H2.500C1.700 23 1 22.500 1 21.500z" fill="#fcd354"/><path d="M6 15h16v8H6z" fill="#3b8fd9"/><path d="M9 19.500h10V23H9z" fill="#fcd354"/><path d="M6 15h16v3H6z" fill="#5eb1f0"/></svg>
<svg class="a" style="left:642.0px;top:11.0px;width:28px;height:26px;" viewBox="0 0 28 26"><path d="M9 3.500L19 1l8 5v14H9z" fill="#1490df"/><path d="M9 11l9-4 9 4v11.500c0 1-.7 1.500-1.500 1.500H9z" fill="#28a8ea"/><path d="M27 11L14 24h11.500c.8 0 1.500-.5 1.500-1.500z" fill="#50d9ff"/><path d="M9 11l18 12.500" stroke="#0a63ad" stroke-width=".6"/><rect x="1" y="7" width="14" height="14" rx="1.500" fill="#0f6cbd"/><ellipse cx="8" cy="14" rx="3.300" ry="4" fill="none" stroke="#fff" stroke-width="1.900"/></svg>
<svg class="a" style="left:699.0px;top:10.0px;width:30px;height:28px;" viewBox="0 0 30 28"><defs><linearGradient id="cp1" x1="0" y1="0" x2="1" y2="1"><stop offset="0" stop-color="#3b9df5"/><stop offset=".5" stop-color="#9b5cf2"/><stop offset="1" stop-color="#f0529a"/></linearGradient><linearGradient id="cp2" x1="0" y1="0" x2="1" y2="1"><stop offset="0" stop-color="#28b7e8"/><stop offset=".45" stop-color="#46d27c"/><stop offset="1" stop-color="#ffc531"/></linearGradient></defs><path d="M12 3h7.500c2.200 0 3.400 1 4 3l3.300 10.500c1 3.200-.8 6.500-4.200 6.500H18c1.500-.8 2.300-2 2.800-3.800L23 9c.5-2-.5-3.300-2.500-3.300H15c-1.300 0-2.300.6-3 2.300z" fill="url(#cp1)"/><path d="M18 25h-7.500c-2.200 0-3.400-1-4-3L3.200 11.500C2.200 8.300 4 5 7.400 5H12c-1.500.8-2.300 2-2.800 3.800L7 19c-.5 2 .5 3.300 2.500 3.300H15c1.300 0 2.300-.6 3-2.300z" fill="url(#cp2)"/><path d="M12 5h6.500L15 23h-5.500z" fill="#7a6cf0" opacity=".55"/></svg>
<svg class="a" style="left:758.0px;top:9.0px;width:32px;height:32px;" viewBox="0 0 32 32"><path d="M14.500 2C8 2 3.500 5 3.500 12.500c0 4 1.300 6.700 3.500 8.300V26l4.300-3.600c1 .2 2 .3 3.200.3 6.500 0 11-3 11-10.200S21 2 14.500 2z" fill="#7d51d8" stroke="#e9defc" stroke-width="1.500"/><path d="M10 7.500c.7-.5 1.500-.3 2 .5l1 1.800c.3.700 0 1.300-.6 1.800-.5.400-.4.900 0 1.600.8 1.300 1.700 2.200 3 3 .7.400 1.200.5 1.600 0 .5-.6 1.100-.9 1.800-.6l1.800 1c.8.500 1 1.300.5 2-1 1.500-2.500 2-4 1.300C13 18 10 15 8.500 11c-.6-1.500 0-2.700 1.500-3.500z" fill="#fff"/><rect x="15" y="15.500" width="16.500" height="14.500" rx="3.500" fill="#ea3a33"/><text x="23.300" y="27.500" font-size="12" fill="#fff" text-anchor="middle" font-family="Liberation Sans,sans-serif">12</text></svg>
<svg class="a" style="left:816.0px;top:10.0px;width:32px;height:30px;" viewBox="0 0 32 30"><circle cx="13.500" cy="13.500" r="12.500" fill="#2ba3df"/><path d="M5.500 13.300l13.700-5.500c.7-.3 1.200.2 1 1l-2.300 11c-.2.800-.7 1-1.300.6l-3.600-2.700-1.800 1.800c-.3.300-.5.300-.6-.2l-.6-3.700 7-6.300-8.500 5.300-3-1z" fill="#fff"/><rect x="13.500" y="16" width="17" height="13.500" rx="3.500" fill="#e4403a"/><text x="22.500" y="27" font-size="10.500" fill="#fff" text-anchor="middle" font-family="Liberation Sans,sans-serif">..81</text></svg>
<svg class="a" style="left:874.0px;top:11.0px;width:28px;height:26px;" viewBox="0 0 28 26"><path d="M8 1.500h17.500c.8 0 1.500.7 1.500 1.500v5H8z" fill="#41a5ee"/><path d="M8 8h19v6H8z" fill="#2b7cd3"/><path d="M8 14h19v6H8z" fill="#185abd"/><path d="M8 20h19v3c0 .8-.7 1.500-1.500 1.500H8z" fill="#103f91"/><rect x="1" y="6" width="14" height="14" rx="1.500" fill="#185abd"/><text x="8" y="17" font-size="10.500" font-weight="bold" fill="#fff" text-anchor="middle" font-family="Liberation Sans,sans-serif">W</text></svg>
<div class="a" style="left:919.0px;top:0.0px;width:54.5px;height:47.0px;background:rgba(255,255,255,.16);"></div>
<div class="a" style="left:973.5px;top:2.0px;width:1.5px;height:43.0px;background:rgba(255,255,255,.08);"></div>
<svg class="a" style="left:932.0px;top:9.0px;width:32px;height:32px;" viewBox="0 0 32 32"><circle cx="14" cy="14" r="12.500" fill="#fff"/><path d="M14 1.500a12.500 12.500 0 0 1 10.800 6.250H14a6.250 6.250 0 0 0-5.400 3.100L3.200 7.750A12.500 12.500 0 0 1 14 1.500z" fill="#ea4335"/><path d="M24.800 7.750a12.500 12.500 0 0 1-10.300 18.730L19.400 17.100a6.250 6.250 0 0 0 0-6.250z" fill="#fbbc04" transform="rotate(0 14 14)"/><path d="M14.500 26.480A12.500 12.500 0 0 1 3.200 7.750l5.400 9.350a6.250 6.250 0 0 0 5.400 3.150 6 6 0 0 0 1.600-.2z" fill="#34a853"/><circle cx="14" cy="14" r="5.600" fill="#fff"/><circle cx="14" cy="14" r="4.500" fill="#4285f4"/><circle cx="22" cy="22.500" r="7.500" fill="#e8336d"/><text x="22" y="26.500" font-size="10.500" fill="#fff" text-anchor="middle" font-family="Liberation Sans,sans-serif">Л</text></svg>
<svg class="a" style="left:991.0px;top:11.0px;width:28px;height:26px;" viewBox="0 0 28 26"><circle cx="16" cy="13" r="11.500" fill="#ed6c47"/><path d="M16 1.500A11.500 11.500 0 0 1 27.500 13H16z" fill="#ff8f6b"/><path d="M16 13h11.500A11.500 11.500 0 0 1 16 24.500z" fill="#d35230"/><rect x="1" y="6" width="14" height="14" rx="1.500" fill="#c43e1c"/><text x="8" y="17" font-size="10.500" font-weight="bold" fill="#fff" text-anchor="middle" font-family="Liberation Sans,sans-serif">P</text></svg>
<div class="a" style="left:458.5px;top:44.5px;width:47.5px;height:2.5px;background:#7fb2dc;"></div>
<div class="a" style="left:575.0px;top:44.5px;width:47.0px;height:2.5px;background:#7fb2dc;"></div>
<div class="a" style="left:748.0px;top:44.5px;width:46.0px;height:2.5px;background:#7fb2dc;"></div>
<div class="a" style="left:807.0px;top:44.5px;width:48.0px;height:2.5px;background:#7fb2dc;"></div>
<div class="a" style="left:866.0px;top:44.5px;width:47.0px;height:2.5px;background:#7fb2dc;"></div>
<div class="a" style="left:919.0px;top:44.5px;width:55.0px;height:2.5px;background:#9cc9ee;"></div>
<div class="a" style="left:983.0px;top:44.5px;width:48.0px;height:2.5px;background:#7fb2dc;"></div>
<svg class="a" style="left:1260.0px;top:13.0px;width:32px;height:22px;" viewBox="0 0 32 22"><defs><linearGradient id="cl" x1="0" y1="0" x2="0" y2="1"><stop offset="0" stop-color="#dfeaf8"/><stop offset="1" stop-color="#7f9fd0"/></linearGradient></defs><path d="M7.500 20.500C3.500 20.500 1 18 1 15s2.500-5 5.500-5C7.500 5.500 11 2.500 15.500 2.500c4 0 7 2.500 8 6 4 0 7 2.500 7 6s-3 6-7 6z" fill="url(#cl)"/></svg>
<div class="a" style="left:1300.7px;top:13.2px;font-size:18.5px;line-height:23px;color:#fff;letter-spacing:-2.26px;white-space:pre;">12°C</div>
<div class="a" style="left:1344.0px;top:13.2px;font-size:18.5px;line-height:23px;color:#fff;letter-spacing:-0.93px;white-space:pre;">Cloudy</div>
<svg class="a" style="left:1424.0px;top:18.0px;width:17px;height:11px;" viewBox="0 0 17 11"><path d="M1.500 9.500L8.500 2l7 7.500" fill="none" stroke="#fff" stroke-width="1.500"/></svg>
<svg class="a" style="left:1452.0px;top:15.0px;width:19px;height:18px;" viewBox="0 0 19 18"><rect x="2.500" y="3.500" width="10" height="11" rx="2.500" fill="none" stroke="#fff" stroke-width="1.300"/><path d="M12.500 7.500l4-2v7l-4-2M4 1.200c2-.8 5-.8 7 0M4 16.800c2 .8 5 .8 7 0" fill="none" stroke="#fff" stroke-width="1.200"/><circle cx="7.500" cy="9" r="1.200" fill="#fff"/></svg>
<svg class="a" style="left:1480.0px;top:13.0px;width:17px;height:22px;" viewBox="0 0 17 22"><rect x="5" y="1" width="7" height="13" rx="3.500" fill="#f2f2f2"/><path d="M2 10.500c0 4 3 6 6.500 6s6.500-2 6.500-6M8.500 16.500v4M5 20.800h7" fill="none" stroke="#fff" stroke-width="1.300"/></svg>
<svg class="a" style="left:1506.0px;top:14.0px;width:22px;height:20px;" viewBox="0 0 22 20"><rect x="1" y="2" width="18" height="13.500" fill="none" stroke="#fff" stroke-width="1.300"/><path d="M7 12c-2-3 0-6.500 3.500-6.500S15 8 13.500 10M6 9.500l1 2.800 2.600-1.200" fill="none" stroke="#fff" stroke-width="1.100"/><circle cx="15.500" cy="15" r="3.800" fill="#e81123"/></svg>
<svg class="a" style="left:1535.0px;top:16.0px;width:22px;height:16px;" viewBox="0 0 22 16"><rect x="2.500" y="4" width="17" height="9" fill="none" stroke="#fff" stroke-width="1.300"/><rect x="19.500" y="6.500" width="1.800" height="4" fill="#fff"/><path d="M3 1v5M1 3.500h4" stroke="#fff" stroke-width="1.200"/><rect x="4" y="5.500" width="3" height="6" fill="#fff"/></svg>
<svg class="a" style="left:1564.0px;top:15.0px;width:20px;height:19px;" viewBox="0 0 20 19"><path d="M1.500 8.500A17 17 0 0 1 18 17" fill="none" stroke="#9aa6b2" stroke-width="1.400" transform="translate(0 -5)"/><path d="M3 17.500A14 14 0 0 1 17 3.500" fill="none" stroke="#fff" stroke-width="1.400"/><path d="M7 17.500A10 10 0 0 1 17 7.500" fill="none" stroke="#fff" stroke-width="1.400"/><path d="M11 17.500a6 6 0 0 1 6-6" fill="none" stroke="#fff" stroke-width="1.400"/><circle cx="16" cy="16.500" r="1.500" fill="#fff"/></svg>
<svg class="a" style="left:1590.0px;top:15.0px;width:24px;height:18px;" viewBox="0 0 24 18"><path d="M1.500 6.500h3.500L9.500 2v14L5 11.500H1.500z" fill="none" stroke="#fff" stroke-width="1.300" stroke-linejoin="round"/><path d="M12.500 6.500a3.500 3.500 0 0 1 0 5M15.500 4a7 7 0 0 1 0 10" fill="none" stroke="#fff" stroke-width="1.200"/><path d="M18.500 1.500a10.500 10.500 0 0 1 0 15" fill="none" stroke="#7f8c99" stroke-width="1.200"/></svg>
<div class="a" style="left:1623.0px;top:16.1px;font-size:14.5px;line-height:18px;color:#fff;letter-spacing:-1.47px;white-space:pre;">ENG</div>
<div class="a" style="left:1681.8px;top:5.1px;font-size:14.5px;line-height:18px;color:#fff;letter-spacing:-0.82px;white-space:pre;">10:49</div>
<div class="a" style="left:1664.7px;top:26.1px;font-size:14.5px;line-height:18px;color:#fff;letter-spacing:-0.73px;white-space:pre;">24.09.2025</div>
<svg class="a" style="left:1750.0px;top:13.0px;width:24px;height:24px;" viewBox="0 0 24 24"><path d="M2 2.500h20v14.500h-8l-4 4V17H2z" fill="#fff"/><path d="M5.500 6.500h13M5.500 9.800h13M5.500 13h8" stroke="#1d2c3c" stroke-width="1.300"/><circle cx="18.500" cy="17.500" r="4" fill="#1d2c3c" stroke="#fff" stroke-width="1.200"/><path d="M17 17.500a2 2 0 1 0 2-2" fill="none" stroke="#fff" stroke-width="1"/></svg>
<div class="a" style="left:1794.5px;top:0.0px;width:1.0px;height:47.0px;background:#5a6876;"></div>
</div>

</div>
</body>
</html>
